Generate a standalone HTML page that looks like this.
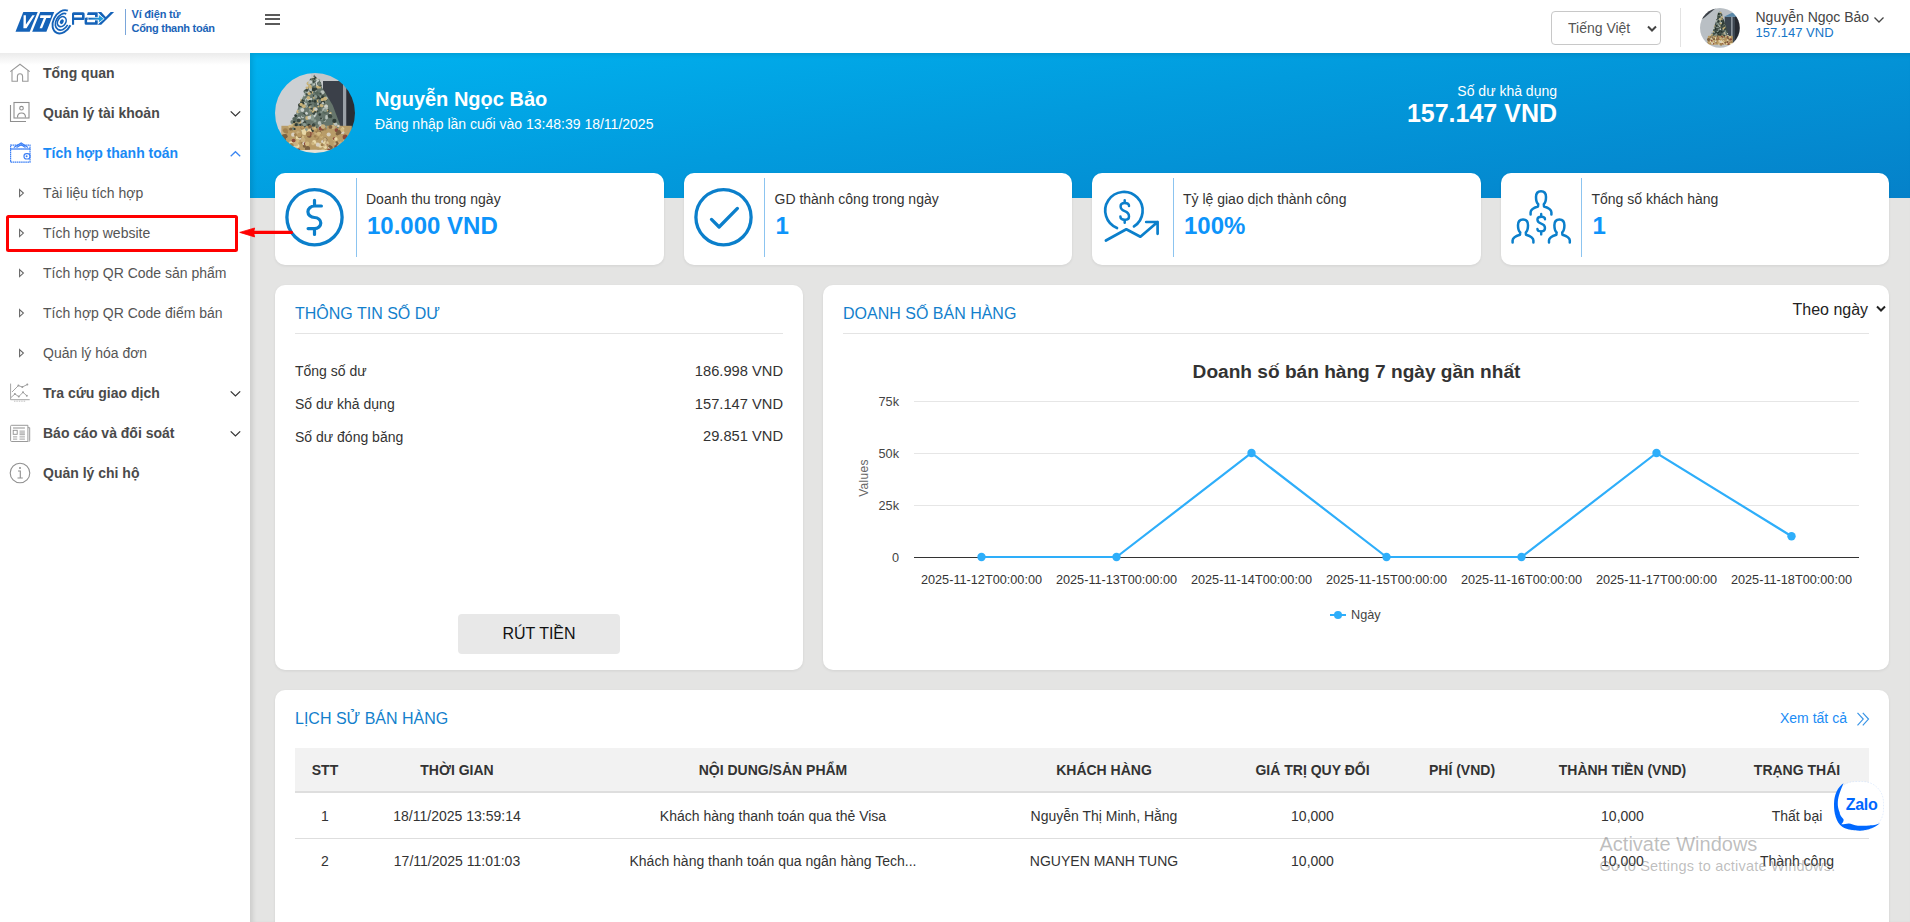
<!DOCTYPE html><html><head><meta charset="utf-8"><style>
*{box-sizing:border-box}
html,body{margin:0;padding:0}
body{width:1910px;height:922px;overflow:hidden;position:relative;font-family:"Liberation Sans",sans-serif;background:#e4e4e3;color:#333}
.t{position:absolute;line-height:1;white-space:nowrap}
.a,.i{position:absolute;display:block;overflow:visible}
.box{position:absolute}
.card{position:absolute;background:#fff;border-radius:10px;box-shadow:0 1px 3px rgba(0,0,0,.08)}
</style></head><body>
<div class="box" style="left:0;top:0;width:1910px;height:53px;background:#fff"></div>
<div class="box" style="left:0;top:53px;width:250px;height:869px;background:#fff"></div>
<div class="box" style="left:0;top:53px;width:250px;height:12px;background:linear-gradient(#ebebeb,rgba(255,255,255,0))"></div>
<div class="box" style="left:250px;top:53px;width:1660px;height:145px;background:linear-gradient(172deg,#00b3f0 0%,#029bdd 45%,#0581c9 100%)"></div>
<div class="box" style="left:250px;top:53px;width:1660px;height:869px;box-shadow:inset 3px 2px 4px rgba(0,0,0,.10)"></div>
<svg class="i" style="left:0;top:0" width="125" height="45" viewBox="0 0 125 45">
<g fill="#1462b8">
<polygon points="23.3,12 37.7,12 29.7,31.8 15.5,31.8"/>
<polygon points="40.2,12 54.2,12 46.4,31.8 32.2,31.8"/>
</g>
<g fill="#fff">
<polygon points="23.6,15.3 25.9,15.3 25.9,24.4 32.4,15.3 34.8,15.3 26.5,28.2 23.4,28.2"/>
<polygon points="40.4,15.3 51.2,15.3 50.4,17.9 46.3,17.9 42.1,28.3 39.6,28.3 43.8,17.9 40,17.9"/>
</g>
<path d="M67.81,10.72 A8.8,12.4 30 1 0 70.43,25.25" fill="none" stroke="#1462b8" stroke-width="1.9"/><path d="M66.27,13.85 A6.2,8.9 30 1 0 67.67,24.90" fill="none" stroke="#1462b8" stroke-width="1.7"/><ellipse cx="61.8" cy="21.7" rx="4.0" ry="5.3" transform="rotate(30 61.8 21.7)" fill="none" stroke="#1462b8" stroke-width="1.6"/><ellipse cx="61.8" cy="21.7" rx="1.8" ry="2.5" transform="rotate(30 61.8 21.7)" fill="#1462b8"/>
<g fill="#1462b8">
<path d="M73.5,12.2 H83 Q84.6,12.2 84.6,13.8 V18.4 Q84.6,20 83,20 H74.1 V24.8 H72 V13.7 Q72,12.2 73.5,12.2 Z M74.1,15.1 V17.4 H82 V15.1 Z" fill-rule="evenodd"/>
<path d="M87.8,12.2 H97.7 V24.8 H86.1 Q84.6,24.8 84.6,23.3 V19 Q84.6,17.4 86.1,17.4 H95 V15.1 H87 Z M87.1,20 V22.2 H95 V20 Z" fill-rule="evenodd"/>
<polygon points="97.7,12 101.2,12 105.8,17 110.7,12 114.1,12 101.2,24.8 97.7,24.8 103.8,18.8"/>
</g>
<defs><linearGradient id="lg1" x1="0" x2="1"><stop offset="0" stop-color="#1462b8"/><stop offset="1" stop-color="#2ab0e6"/></linearGradient></defs>
<polygon points="88,17.4 98.6,17.4 98.6,14.4 104.2,18.7 98.6,23 98.6,20 88,20" fill="url(#lg1)" stroke="#fff" stroke-width="0.7"/>
</svg>
<div class="box" style="left:125px;top:9px;width:1px;height:26px;background:#7aa6da"></div>
<div class="t" style="left:131.5px;top:9.29px;font-size:11px;font-weight:700;color:#1b64b8;letter-spacing:-0.2px">Ví điện tử</div>
<div class="t" style="left:131.5px;top:22.89px;font-size:11px;font-weight:700;color:#1b64b8;letter-spacing:-0.28px">Cổng thanh toán</div>
<div class="box" style="left:265px;top:13.5px;width:15px;height:2px;background:#5a5a5a"></div>
<div class="box" style="left:265px;top:18px;width:15px;height:2px;background:#5a5a5a"></div>
<div class="box" style="left:265px;top:22.5px;width:15px;height:2px;background:#5a5a5a"></div>
<div class="box" style="left:1551px;top:11px;width:110px;height:34px;border:1px solid #c8c8c8;border-radius:4px;background:#fff"></div>
<div class="t" style="left:1568px;top:20.65px;font-size:14px;font-weight:400;color:#555;">Tiếng Việt</div>
<svg class="i" style="left:1646px;top:23.5px" width="12" height="10" viewBox="0 0 12 10"><path d="M2,2.5 L6,6.5 L10,2.5" fill="none" stroke="#444" stroke-width="2"/></svg>
<div class="box" style="left:1680px;top:8px;width:1px;height:39px;background:#e3e3e3"></div>
<svg class="a" style="left:1700.3px;top:8.200000000000003px" width="39.8" height="39.8" viewBox="0 0 100 100">
<defs><clipPath id="ch"><circle cx="50" cy="50" r="50"/></clipPath>
<filter id="fh" x="-20%" y="-20%" width="140%" height="140%"><feGaussianBlur stdDeviation="1.3"/></filter></defs>
<g clip-path="url(#ch)"><g filter="url(#fh)">
<rect x="-5" y="-5" width="110" height="110" fill="#b9bfc4"/><polygon points="0,0 40,0 10,25 0,30" fill="#3a4046"/><rect x="62" y="22" width="28" height="70" fill="#3b4450"/><rect x="78" y="22" width="4" height="70" fill="#8e979f"/><rect x="88" y="0" width="16" height="100" fill="#252a30"/><polygon points="60,22 95,5 95,22" fill="#5a88a8"/><polygon points="50,8 36,45 30,78 74,78 66,45" fill="#3e4a44"/><rect x="20" y="70" width="62" height="22" fill="#b39258"/>
<circle cx="43.2" cy="33.4" r="1.3" fill="#c8b27a"/><circle cx="33.3" cy="66.2" r="1.3" fill="#5f6f64"/><circle cx="37.3" cy="45.5" r="1.8" fill="#b9c2bc"/><circle cx="50.8" cy="27.9" r="2.4" fill="#2f3b35"/><circle cx="47.0" cy="20.2" r="2.0" fill="#c8b27a"/><circle cx="50.7" cy="16.1" r="2.6" fill="#2f3b35"/><circle cx="52.6" cy="15.1" r="1.8" fill="#8a9a90"/><circle cx="52.0" cy="47.7" r="2.3" fill="#5f6f64"/><circle cx="51.1" cy="23.9" r="1.5" fill="#c8b27a"/><circle cx="52.0" cy="18.4" r="1.3" fill="#5f6f64"/><circle cx="52.6" cy="25.6" r="2.3" fill="#b9c2bc"/><circle cx="60.8" cy="42.7" r="1.6" fill="#8a9a90"/><circle cx="57.9" cy="64.4" r="1.3" fill="#46564d"/><circle cx="49.9" cy="31.8" r="2.2" fill="#8a9a90"/><circle cx="58.6" cy="31.0" r="1.9" fill="#2f3b35"/><circle cx="48.0" cy="22.9" r="1.8" fill="#b9c2bc"/><circle cx="30.1" cy="75.5" r="2.0" fill="#5f6f64"/><circle cx="41.9" cy="69.8" r="1.7" fill="#c8b27a"/><circle cx="58.0" cy="44.8" r="2.4" fill="#2f3b35"/><circle cx="48.8" cy="74.3" r="1.3" fill="#c8b27a"/><circle cx="42.9" cy="60.3" r="2.6" fill="#5f6f64"/><circle cx="41.1" cy="66.2" r="2.4" fill="#b9c2bc"/><circle cx="59.0" cy="34.9" r="1.4" fill="#8a9a90"/><circle cx="45.4" cy="19.7" r="1.6" fill="#26312c"/><circle cx="46.2" cy="60.7" r="1.9" fill="#26312c"/><circle cx="48.8" cy="23.0" r="2.4" fill="#8a9a90"/><circle cx="64.9" cy="66.1" r="2.2" fill="#8a9a90"/><circle cx="58.8" cy="77.1" r="2.5" fill="#b9c2bc"/><circle cx="46.1" cy="22.0" r="2.1" fill="#46564d"/><circle cx="51.9" cy="12.8" r="1.6" fill="#46564d"/><circle cx="49.6" cy="12.3" r="2.1" fill="#8a9a90"/><circle cx="42.8" cy="33.0" r="1.9" fill="#26312c"/><circle cx="55.7" cy="52.8" r="1.8" fill="#2f3b35"/><circle cx="69.5" cy="69.5" r="2.3" fill="#c8b27a"/><circle cx="47.7" cy="37.9" r="1.9" fill="#2f3b35"/><circle cx="43.0" cy="38.4" r="1.8" fill="#46564d"/><circle cx="51.0" cy="19.3" r="1.2" fill="#2f3b35"/><circle cx="45.3" cy="22.0" r="2.1" fill="#8a9a90"/><circle cx="47.6" cy="16.6" r="1.4" fill="#b9c2bc"/><circle cx="47.5" cy="28.6" r="1.9" fill="#8a9a90"/><circle cx="49.9" cy="19.6" r="1.9" fill="#b9c2bc"/><circle cx="43.3" cy="32.6" r="1.7" fill="#c8b27a"/><circle cx="55.5" cy="29.5" r="1.9" fill="#46564d"/><circle cx="56.4" cy="25.5" r="1.4" fill="#8a9a90"/><circle cx="36.3" cy="47.8" r="1.6" fill="#5f6f64"/><circle cx="36.4" cy="54.4" r="1.6" fill="#26312c"/><circle cx="42.9" cy="36.2" r="1.5" fill="#26312c"/><circle cx="50.1" cy="47.7" r="1.5" fill="#c8b27a"/><circle cx="69.7" cy="65.6" r="1.5" fill="#26312c"/><circle cx="48.4" cy="27.8" r="1.5" fill="#26312c"/><circle cx="46.0" cy="46.2" r="2.6" fill="#2f3b35"/><circle cx="48.9" cy="64.1" r="2.2" fill="#46564d"/><circle cx="47.5" cy="75.1" r="2.6" fill="#c8b27a"/><circle cx="43.6" cy="75.0" r="1.3" fill="#46564d"/><circle cx="45.8" cy="43.0" r="2.1" fill="#b9c2bc"/><circle cx="65.2" cy="71.4" r="2.5" fill="#b9c2bc"/><circle cx="52.9" cy="34.7" r="2.1" fill="#26312c"/><circle cx="62.7" cy="72.0" r="1.5" fill="#26312c"/><circle cx="47.1" cy="70.7" r="1.7" fill="#c8b27a"/><circle cx="69.0" cy="64.9" r="1.8" fill="#b9c2bc"/><circle cx="34.4" cy="61.1" r="1.4" fill="#46564d"/><circle cx="46.2" cy="20.4" r="2.3" fill="#b9c2bc"/><circle cx="53.8" cy="21.6" r="2.1" fill="#b9c2bc"/><circle cx="51.0" cy="35.1" r="1.2" fill="#46564d"/><circle cx="59.1" cy="64.8" r="1.9" fill="#2f3b35"/><circle cx="47.0" cy="73.6" r="1.5" fill="#26312c"/><circle cx="29.5" cy="69.7" r="1.6" fill="#46564d"/><circle cx="51.4" cy="27.9" r="2.0" fill="#8a9a90"/><circle cx="31.7" cy="67.1" r="1.7" fill="#c8b27a"/><circle cx="52.1" cy="42.2" r="1.8" fill="#5f6f64"/><circle cx="50.1" cy="72.6" r="1.4" fill="#5f6f64"/><circle cx="60.3" cy="45.7" r="1.5" fill="#26312c"/><circle cx="51.6" cy="12.3" r="1.4" fill="#46564d"/><circle cx="37.7" cy="52.9" r="1.7" fill="#2f3b35"/><circle cx="51.5" cy="46.2" r="2.3" fill="#26312c"/><circle cx="30.6" cy="70.3" r="1.6" fill="#46564d"/><circle cx="50.3" cy="63.0" r="1.2" fill="#5f6f64"/><circle cx="30.7" cy="71.0" r="2.1" fill="#8a9a90"/><circle cx="50.3" cy="45.4" r="1.6" fill="#c8b27a"/><circle cx="58.4" cy="45.5" r="2.5" fill="#5f6f64"/><circle cx="63.5" cy="58.1" r="2.5" fill="#8a9a90"/><circle cx="36.9" cy="70.9" r="1.4" fill="#b9c2bc"/><circle cx="49.4" cy="20.0" r="2.1" fill="#2f3b35"/><circle cx="43.1" cy="40.3" r="2.3" fill="#8a9a90"/><circle cx="34.7" cy="71.2" r="2.1" fill="#c8b27a"/><circle cx="44.7" cy="36.2" r="2.6" fill="#46564d"/><circle cx="56.7" cy="26.5" r="2.4" fill="#b9c2bc"/><circle cx="52.1" cy="22.7" r="1.4" fill="#46564d"/><circle cx="50.4" cy="40.5" r="1.8" fill="#8a9a90"/><circle cx="41.5" cy="35.5" r="1.2" fill="#8a9a90"/><circle cx="48.2" cy="48.6" r="1.7" fill="#2f3b35"/><circle cx="44.3" cy="46.2" r="1.4" fill="#2f3b35"/><circle cx="37.7" cy="72.6" r="1.3" fill="#2f3b35"/><circle cx="57.0" cy="29.9" r="1.6" fill="#46564d"/><circle cx="49.1" cy="20.6" r="2.3" fill="#c8b27a"/><circle cx="44.2" cy="29.1" r="2.0" fill="#5f6f64"/><circle cx="35.3" cy="58.2" r="2.3" fill="#2f3b35"/><circle cx="55.3" cy="24.1" r="2.5" fill="#8a9a90"/><circle cx="59.9" cy="53.9" r="2.1" fill="#2f3b35"/><circle cx="46.5" cy="26.7" r="1.8" fill="#2f3b35"/><circle cx="51.1" cy="34.4" r="2.1" fill="#8a9a90"/><circle cx="51.5" cy="14.9" r="2.6" fill="#2f3b35"/><circle cx="44.7" cy="29.3" r="2.1" fill="#8a9a90"/><circle cx="41.6" cy="47.1" r="1.9" fill="#b9c2bc"/><circle cx="48.0" cy="23.7" r="2.6" fill="#2f3b35"/><circle cx="46.7" cy="14.4" r="2.0" fill="#5f6f64"/><circle cx="49.7" cy="24.5" r="1.3" fill="#b9c2bc"/><circle cx="47.2" cy="66.0" r="2.0" fill="#b9c2bc"/><circle cx="70.7" cy="70.7" r="2.2" fill="#8a9a90"/><circle cx="42.4" cy="76.8" r="2.4" fill="#26312c"/><circle cx="36.6" cy="60.1" r="2.6" fill="#8a9a90"/><circle cx="29.7" cy="67.2" r="2.2" fill="#c8b27a"/><circle cx="44.5" cy="28.9" r="2.1" fill="#2f3b35"/><circle cx="50.1" cy="37.1" r="2.0" fill="#8a9a90"/><circle cx="33.9" cy="57.7" r="1.4" fill="#46564d"/><circle cx="44.1" cy="41.4" r="2.6" fill="#8a9a90"/><circle cx="42.6" cy="48.1" r="1.5" fill="#8a9a90"/><circle cx="47.8" cy="24.1" r="1.9" fill="#2f3b35"/><circle cx="41.9" cy="45.2" r="2.3" fill="#5f6f64"/><circle cx="52.9" cy="18.0" r="1.8" fill="#46564d"/><circle cx="46.6" cy="14.8" r="2.1" fill="#8a9a90"/><circle cx="54.1" cy="17.6" r="2.3" fill="#26312c"/><circle cx="57.3" cy="55.4" r="1.7" fill="#5f6f64"/><circle cx="59.5" cy="33.5" r="1.6" fill="#46564d"/><circle cx="38.5" cy="52.8" r="2.4" fill="#26312c"/><circle cx="55.6" cy="70.9" r="2.2" fill="#c8b27a"/><circle cx="61.2" cy="45.4" r="1.9" fill="#26312c"/><circle cx="62.7" cy="67.1" r="2.2" fill="#26312c"/><circle cx="58.5" cy="64.7" r="2.1" fill="#c8b27a"/><circle cx="45.9" cy="17.6" r="1.7" fill="#c8b27a"/><circle cx="53.3" cy="18.9" r="1.3" fill="#5f6f64"/><circle cx="50.2" cy="13.2" r="1.9" fill="#46564d"/><circle cx="51.6" cy="12.2" r="2.5" fill="#c8b27a"/><circle cx="31.9" cy="71.3" r="1.3" fill="#5f6f64"/><circle cx="40.7" cy="60.6" r="2.4" fill="#2f3b35"/><circle cx="54.0" cy="27.5" r="2.2" fill="#46564d"/><circle cx="49.7" cy="76.4" r="1.3" fill="#b9c2bc"/><circle cx="40.4" cy="72.1" r="2.1" fill="#2f3b35"/><circle cx="35.9" cy="54.4" r="1.7" fill="#46564d"/><circle cx="56.5" cy="55.0" r="2.0" fill="#5f6f64"/><circle cx="47.4" cy="12.8" r="2.6" fill="#8a9a90"/><circle cx="47.3" cy="18.6" r="1.6" fill="#b9c2bc"/><circle cx="49.0" cy="46.1" r="2.3" fill="#b9c2bc"/><circle cx="52.4" cy="77.6" r="2.6" fill="#8a9a90"/><circle cx="27.8" cy="73.8" r="1.3" fill="#b9c2bc"/><circle cx="63.5" cy="45.4" r="1.7" fill="#8a9a90"/><circle cx="69.5" cy="72.5" r="2.0" fill="#2f3b35"/><circle cx="50.3" cy="21.4" r="1.4" fill="#8a9a90"/><circle cx="50.4" cy="66.1" r="2.2" fill="#2f3b35"/><circle cx="56.1" cy="27.3" r="1.8" fill="#b9c2bc"/><circle cx="55.5" cy="22.5" r="1.8" fill="#c8b27a"/><circle cx="43.4" cy="31.9" r="1.7" fill="#8a9a90"/><circle cx="48.2" cy="20.0" r="2.3" fill="#8a9a90"/><circle cx="34.1" cy="67.4" r="2.2" fill="#46564d"/><circle cx="40.6" cy="71.5" r="1.3" fill="#8a9a90"/><circle cx="58.3" cy="37.8" r="1.7" fill="#2f3b35"/><circle cx="44.6" cy="40.3" r="1.6" fill="#2f3b35"/><circle cx="51.2" cy="15.4" r="2.5" fill="#c8b27a"/><circle cx="46.2" cy="28.5" r="1.6" fill="#5f6f64"/><circle cx="61.1" cy="63.0" r="2.4" fill="#b9c2bc"/><circle cx="55.3" cy="65.6" r="2.0" fill="#5f6f64"/><circle cx="33.5" cy="59.5" r="1.8" fill="#c8b27a"/><circle cx="38.4" cy="52.6" r="1.6" fill="#26312c"/><circle cx="53.2" cy="15.2" r="1.4" fill="#46564d"/><circle cx="44.9" cy="39.4" r="2.2" fill="#8a9a90"/><circle cx="38.5" cy="76.4" r="1.5" fill="#c8b27a"/><circle cx="54.5" cy="43.9" r="1.4" fill="#2f3b35"/><circle cx="46.4" cy="22.7" r="1.9" fill="#26312c"/><circle cx="56.1" cy="26.5" r="1.8" fill="#26312c"/><circle cx="46.5" cy="21.2" r="1.4" fill="#2f3b35"/><circle cx="44.7" cy="48.7" r="1.6" fill="#8a9a90"/><circle cx="61.7" cy="49.6" r="2.4" fill="#c8b27a"/><circle cx="55.4" cy="37.3" r="1.7" fill="#46564d"/><circle cx="41.2" cy="34.3" r="2.0" fill="#8a9a90"/><circle cx="53.9" cy="35.8" r="2.1" fill="#5f6f64"/><circle cx="37.8" cy="68.9" r="2.5" fill="#8a9a90"/><circle cx="53.2" cy="37.4" r="2.5" fill="#b9c2bc"/><circle cx="65.8" cy="68.0" r="1.4" fill="#2f3b35"/><circle cx="56.3" cy="40.1" r="1.9" fill="#26312c"/><circle cx="34.6" cy="50.8" r="2.5" fill="#b9c2bc"/><circle cx="51.3" cy="73.3" r="2.6" fill="#b9c2bc"/><circle cx="43.7" cy="28.4" r="1.4" fill="#46564d"/><circle cx="31.4" cy="76.1" r="2.2" fill="#26312c"/><circle cx="58.9" cy="54.7" r="1.3" fill="#b9c2bc"/><circle cx="30.5" cy="63.3" r="1.5" fill="#46564d"/><circle cx="56.6" cy="72.7" r="2.5" fill="#8a9a90"/><circle cx="50.9" cy="53.3" r="2.2" fill="#b9c2bc"/><circle cx="45.6" cy="19.4" r="2.5" fill="#5f6f64"/><circle cx="46.7" cy="24.7" r="2.0" fill="#26312c"/><circle cx="48.9" cy="12.7" r="1.6" fill="#b9c2bc"/><circle cx="56.5" cy="32.9" r="1.9" fill="#46564d"/><circle cx="46.1" cy="27.5" r="2.2" fill="#b9c2bc"/><circle cx="41.1" cy="32.3" r="2.4" fill="#b9c2bc"/><circle cx="36.0" cy="54.7" r="2.1" fill="#46564d"/><circle cx="37.5" cy="73.1" r="2.2" fill="#2f3b35"/><circle cx="45.0" cy="59.4" r="1.5" fill="#b9c2bc"/><circle cx="59.6" cy="64.6" r="1.3" fill="#5f6f64"/><circle cx="41.9" cy="44.7" r="2.3" fill="#26312c"/><circle cx="45.7" cy="27.2" r="2.4" fill="#26312c"/><circle cx="51.2" cy="19.2" r="1.5" fill="#5f6f64"/><circle cx="48.8" cy="26.7" r="1.3" fill="#c8b27a"/><circle cx="63.2" cy="51.3" r="1.5" fill="#2f3b35"/><circle cx="32.9" cy="76.3" r="2.2" fill="#2f3b35"/><circle cx="49.3" cy="24.2" r="2.4" fill="#c8b27a"/><circle cx="68.5" cy="60.4" r="1.7" fill="#46564d"/><circle cx="55.8" cy="24.2" r="1.9" fill="#c8b27a"/><circle cx="54.3" cy="32.6" r="1.7" fill="#26312c"/><circle cx="43.5" cy="33.9" r="1.3" fill="#2f3b35"/><circle cx="49.3" cy="17.3" r="2.0" fill="#2f3b35"/><circle cx="45.4" cy="62.1" r="2.4" fill="#26312c"/><circle cx="47.2" cy="66.3" r="2.2" fill="#2f3b35"/><circle cx="50.6" cy="24.9" r="1.5" fill="#b9c2bc"/><circle cx="58.4" cy="36.0" r="2.1" fill="#2f3b35"/><circle cx="52.0" cy="28.4" r="1.3" fill="#b9c2bc"/><circle cx="47.0" cy="14.3" r="1.6" fill="#2f3b35"/><circle cx="65.1" cy="61.3" r="1.7" fill="#8a9a90"/><circle cx="59.0" cy="34.1" r="1.6" fill="#2f3b35"/><circle cx="43.3" cy="59.3" r="1.6" fill="#8a9a90"/><circle cx="53.5" cy="59.6" r="2.1" fill="#26312c"/><circle cx="27.9" cy="74.3" r="1.4" fill="#46564d"/><circle cx="48.7" cy="59.2" r="1.7" fill="#26312c"/><circle cx="48.9" cy="28.6" r="1.4" fill="#b9c2bc"/><circle cx="36.8" cy="44.8" r="1.6" fill="#c8b27a"/><circle cx="37.6" cy="57.7" r="1.7" fill="#46564d"/><circle cx="47.3" cy="33.1" r="2.0" fill="#26312c"/><circle cx="47.0" cy="45.8" r="1.5" fill="#46564d"/><circle cx="46.2" cy="16.3" r="2.0" fill="#5f6f64"/><circle cx="49.1" cy="22.6" r="2.6" fill="#2f3b35"/><circle cx="43.0" cy="29.5" r="1.8" fill="#2f3b35"/><circle cx="72.8" cy="77.2" r="1.5" fill="#46564d"/><circle cx="52.8" cy="39.5" r="1.5" fill="#c8b27a"/><circle cx="57.9" cy="47.5" r="1.4" fill="#26312c"/><circle cx="41.3" cy="67.5" r="1.6" fill="#5f6f64"/><circle cx="46.1" cy="28.8" r="1.5" fill="#b9c2bc"/><circle cx="44.5" cy="28.2" r="1.5" fill="#5f6f64"/><circle cx="48.0" cy="16.3" r="1.9" fill="#46564d"/><circle cx="54.7" cy="27.3" r="1.8" fill="#c8b27a"/><circle cx="46.6" cy="14.4" r="1.5" fill="#26312c"/><circle cx="46.9" cy="41.6" r="1.5" fill="#8a9a90"/><circle cx="50.8" cy="15.3" r="2.0" fill="#26312c"/><circle cx="44.1" cy="73.4" r="1.4" fill="#26312c"/><circle cx="58.7" cy="51.8" r="2.5" fill="#c8b27a"/><circle cx="51.0" cy="19.0" r="1.7" fill="#5f6f64"/><circle cx="48.9" cy="14.5" r="1.5" fill="#2f3b35"/><circle cx="51.6" cy="28.8" r="2.5" fill="#c8b27a"/><circle cx="63.0" cy="65.8" r="2.1" fill="#b9c2bc"/><circle cx="47.5" cy="24.2" r="1.2" fill="#46564d"/><circle cx="49.6" cy="44.7" r="1.3" fill="#b9c2bc"/><circle cx="51.1" cy="38.1" r="1.9" fill="#c8b27a"/><circle cx="46.5" cy="55.1" r="1.8" fill="#8a9a90"/><circle cx="46.6" cy="30.7" r="1.6" fill="#2f3b35"/><circle cx="45.7" cy="49.4" r="1.2" fill="#b9c2bc"/><circle cx="61.7" cy="62.6" r="1.5" fill="#c8b27a"/><circle cx="39.0" cy="60.1" r="1.8" fill="#2f3b35"/><circle cx="45.3" cy="22.3" r="1.8" fill="#2f3b35"/><circle cx="48.3" cy="70.3" r="1.4" fill="#46564d"/><circle cx="47.3" cy="15.4" r="2.5" fill="#26312c"/><circle cx="51.1" cy="17.9" r="2.2" fill="#8a9a90"/><circle cx="48.1" cy="23.3" r="1.9" fill="#46564d"/><circle cx="32.1" cy="73.1" r="2.3" fill="#b9c2bc"/><circle cx="68.3" cy="87.4" r="1.7" fill="#e8d8a8"/><circle cx="78.5" cy="90.7" r="2.0" fill="#d8d0c0"/><circle cx="58.2" cy="83.4" r="3.0" fill="#a08050"/><circle cx="69.5" cy="83.6" r="2.6" fill="#d0b880"/><circle cx="57.3" cy="88.8" r="2.9" fill="#8a4a3a"/><circle cx="33.1" cy="74.0" r="3.1" fill="#7a6040"/><circle cx="41.6" cy="73.4" r="1.9" fill="#d0b880"/><circle cx="73.8" cy="85.9" r="3.0" fill="#b89a64"/><circle cx="60.3" cy="88.5" r="1.7" fill="#c8b080"/><circle cx="53.0" cy="83.2" r="2.6" fill="#e8d8a8"/><circle cx="35.0" cy="76.8" r="2.6" fill="#7a6040"/><circle cx="46.3" cy="79.8" r="1.5" fill="#b89a64"/><circle cx="47.9" cy="91.7" r="2.8" fill="#d8d0c0"/><circle cx="47.5" cy="87.2" r="2.9" fill="#d0b880"/><circle cx="24.0" cy="78.8" r="2.2" fill="#c8b080"/><circle cx="46.5" cy="72.0" r="1.6" fill="#b89a64"/><circle cx="75.3" cy="72.9" r="2.8" fill="#c8b080"/><circle cx="23.3" cy="81.3" r="2.6" fill="#7a6040"/><circle cx="21.6" cy="87.3" r="3.2" fill="#a08050"/><circle cx="68.9" cy="86.1" r="1.7" fill="#8a4a3a"/><circle cx="37.3" cy="89.5" r="2.7" fill="#d0b880"/><circle cx="33.3" cy="85.9" r="2.5" fill="#c8b080"/><circle cx="39.4" cy="75.5" r="3.0" fill="#e8d8a8"/><circle cx="35.2" cy="80.0" r="1.9" fill="#d8d0c0"/><circle cx="50.4" cy="75.8" r="2.1" fill="#c8b080"/><circle cx="44.2" cy="74.4" r="2.7" fill="#e8d8a8"/><circle cx="30.1" cy="89.7" r="1.7" fill="#e8d8a8"/><circle cx="58.2" cy="81.7" r="3.1" fill="#c8b080"/><circle cx="51.3" cy="80.0" r="1.9" fill="#a08050"/><circle cx="71.4" cy="81.8" r="2.0" fill="#c8b080"/><circle cx="54.6" cy="91.8" r="2.1" fill="#c8b080"/><circle cx="33.8" cy="71.8" r="2.0" fill="#b89a64"/><circle cx="38.6" cy="81.4" r="2.7" fill="#c8b080"/><circle cx="33.3" cy="86.4" r="2.5" fill="#e8d8a8"/><circle cx="50.8" cy="79.5" r="1.7" fill="#b89a64"/><circle cx="59.2" cy="75.0" r="1.6" fill="#b89a64"/><circle cx="38.2" cy="82.5" r="2.4" fill="#c8b080"/><circle cx="38.1" cy="79.1" r="1.8" fill="#d0b880"/><circle cx="48.5" cy="83.7" r="1.5" fill="#d0b880"/><circle cx="62.4" cy="87.6" r="1.7" fill="#d8d0c0"/><circle cx="72.3" cy="84.0" r="2.2" fill="#e8d8a8"/><circle cx="20.7" cy="75.8" r="2.5" fill="#c8b080"/><circle cx="56.1" cy="82.7" r="1.9" fill="#d8d0c0"/><circle cx="22.6" cy="89.9" r="2.2" fill="#b89a64"/><circle cx="23.5" cy="75.2" r="1.5" fill="#a08050"/><circle cx="76.5" cy="82.1" r="2.2" fill="#d0b880"/><circle cx="58.6" cy="81.4" r="2.9" fill="#7a6040"/><circle cx="38.6" cy="73.8" r="2.6" fill="#e8d8a8"/><circle cx="63.5" cy="91.9" r="2.7" fill="#d8d0c0"/><circle cx="70.7" cy="70.1" r="1.6" fill="#d8d0c0"/><circle cx="30.5" cy="84.4" r="1.9" fill="#a08050"/><circle cx="27.4" cy="84.2" r="2.7" fill="#e8d8a8"/><circle cx="53.2" cy="75.9" r="2.7" fill="#7a6040"/><circle cx="78.3" cy="90.2" r="2.6" fill="#e8d8a8"/><circle cx="33.0" cy="91.2" r="1.8" fill="#b89a64"/><circle cx="70.5" cy="89.9" r="3.1" fill="#8a4a3a"/><circle cx="39.6" cy="86.4" r="2.1" fill="#7a6040"/><circle cx="74.5" cy="75.3" r="2.3" fill="#d8d0c0"/><circle cx="20.4" cy="81.7" r="2.2" fill="#b89a64"/><circle cx="54.2" cy="85.9" r="2.8" fill="#e8d8a8"/><circle cx="55.1" cy="78.6" r="1.7" fill="#d0b880"/><circle cx="26.4" cy="70.6" r="2.1" fill="#d0b880"/><circle cx="21.7" cy="73.1" r="1.7" fill="#b89a64"/><circle cx="22.6" cy="84.2" r="2.8" fill="#a08050"/><circle cx="55.4" cy="71.4" r="1.8" fill="#c8b080"/><circle cx="52.0" cy="91.0" r="3.0" fill="#a08050"/><circle cx="62.7" cy="86.6" r="1.7" fill="#7a6040"/><circle cx="26.7" cy="74.5" r="3.1" fill="#b89a64"/><circle cx="65.2" cy="90.0" r="2.9" fill="#a08050"/><circle cx="37.2" cy="83.9" r="1.7" fill="#a08050"/><circle cx="58.8" cy="87.4" r="2.0" fill="#e8d8a8"/><circle cx="21.3" cy="79.3" r="3.1" fill="#e8d8a8"/><circle cx="65.6" cy="71.1" r="2.8" fill="#c8b080"/><circle cx="48.6" cy="83.2" r="2.6" fill="#e8d8a8"/><circle cx="44.8" cy="70.7" r="2.4" fill="#7a6040"/><circle cx="48.1" cy="72.2" r="2.4" fill="#b89a64"/><circle cx="71.7" cy="74.8" r="2.5" fill="#a08050"/><circle cx="46.2" cy="76.3" r="2.0" fill="#8a4a3a"/><circle cx="23.2" cy="86.5" r="2.3" fill="#c8b080"/><circle cx="67.8" cy="80.8" r="3.1" fill="#d0b880"/><circle cx="77.4" cy="83.0" r="2.5" fill="#e8d8a8"/><circle cx="68.9" cy="73.5" r="2.3" fill="#8a4a3a"/><circle cx="58.2" cy="72.4" r="2.3" fill="#a08050"/><circle cx="53.7" cy="91.8" r="2.6" fill="#a08050"/><circle cx="44.1" cy="77.8" r="3.0" fill="#7a6040"/><circle cx="45.3" cy="86.4" r="2.1" fill="#b89a64"/><circle cx="45.7" cy="76.7" r="2.1" fill="#d0b880"/><circle cx="34.0" cy="89.4" r="1.7" fill="#d8d0c0"/><circle cx="61.4" cy="83.1" r="2.1" fill="#b89a64"/><circle cx="29.3" cy="77.2" r="2.6" fill="#d8d0c0"/><circle cx="30.2" cy="86.3" r="2.7" fill="#d8d0c0"/><circle cx="33.9" cy="75.7" r="2.3" fill="#c8b080"/><circle cx="34.3" cy="89.5" r="2.0" fill="#8a4a3a"/><circle cx="69.6" cy="86.6" r="2.7" fill="#d0b880"/><circle cx="63.4" cy="91.4" r="1.8" fill="#c8b080"/><circle cx="31.4" cy="77.2" r="1.8" fill="#a08050"/><circle cx="31.7" cy="84.5" r="3.2" fill="#d0b880"/><circle cx="64.0" cy="87.5" r="2.0" fill="#7a6040"/><circle cx="74.7" cy="72.4" r="1.9" fill="#e8d8a8"/><circle cx="22.0" cy="78.5" r="3.0" fill="#7a6040"/><circle cx="33.3" cy="79.6" r="2.3" fill="#e8d8a8"/><circle cx="56.2" cy="73.1" r="1.5" fill="#7a6040"/><circle cx="71.2" cy="75.3" r="2.9" fill="#7a6040"/><circle cx="59.1" cy="84.7" r="2.7" fill="#8a4a3a"/><circle cx="47.2" cy="84.1" r="1.9" fill="#c8b080"/><circle cx="73.7" cy="85.4" r="2.8" fill="#8a4a3a"/><circle cx="57.8" cy="85.7" r="2.9" fill="#e8d8a8"/><circle cx="21.2" cy="80.6" r="2.4" fill="#7a6040"/><circle cx="72.4" cy="84.5" r="2.8" fill="#c8b080"/><circle cx="49.4" cy="78.6" r="1.6" fill="#a08050"/><circle cx="29.7" cy="82.0" r="2.4" fill="#8a4a3a"/><circle cx="54.5" cy="72.2" r="2.7" fill="#8a4a3a"/><circle cx="58.4" cy="81.3" r="2.4" fill="#c8b080"/><circle cx="76.9" cy="79.0" r="3.2" fill="#8a4a3a"/><circle cx="50.8" cy="74.0" r="2.7" fill="#a08050"/><circle cx="58.3" cy="83.5" r="2.0" fill="#e8d8a8"/><circle cx="20.8" cy="78.8" r="3.1" fill="#7a6040"/><circle cx="60.5" cy="83.8" r="1.7" fill="#e8d8a8"/><circle cx="44.0" cy="76.7" r="3.2" fill="#8a4a3a"/><circle cx="47.7" cy="91.1" r="1.7" fill="#d0b880"/><circle cx="68.6" cy="87.1" r="2.3" fill="#8a4a3a"/><circle cx="33.6" cy="82.4" r="2.1" fill="#d0b880"/><circle cx="69.1" cy="84.1" r="2.3" fill="#7a6040"/><circle cx="52.9" cy="76.5" r="2.8" fill="#d0b880"/><circle cx="67.0" cy="80.3" r="2.0" fill="#8a4a3a"/><circle cx="35.2" cy="78.3" r="2.7" fill="#7a6040"/><circle cx="68.3" cy="80.6" r="2.1" fill="#e8d8a8"/><circle cx="39.2" cy="84.4" r="2.2" fill="#d8d0c0"/><circle cx="59.6" cy="84.0" r="1.8" fill="#c8b080"/><circle cx="43.1" cy="76.7" r="2.9" fill="#a08050"/><circle cx="67.0" cy="89.9" r="2.4" fill="#d0b880"/><circle cx="54.9" cy="77.6" r="1.9" fill="#b89a64"/><circle cx="37.6" cy="71.6" r="2.5" fill="#a08050"/><circle cx="31.1" cy="88.8" r="2.1" fill="#d8d0c0"/><circle cx="74.2" cy="73.4" r="2.5" fill="#d0b880"/><circle cx="78.6" cy="85.1" r="2.6" fill="#a08050"/><circle cx="67.3" cy="89.7" r="1.8" fill="#e8d8a8"/><circle cx="51.8" cy="85.2" r="2.6" fill="#d8d0c0"/><circle cx="27.1" cy="72.6" r="1.9" fill="#7a6040"/><circle cx="49.6" cy="73.1" r="2.3" fill="#b89a64"/>

</g></g></svg>
<div class="t" style="left:1755.5px;top:9.55px;font-size:14px;font-weight:400;color:#444;">Nguyễn Ngọc Bảo</div>
<svg class="i" style="left:1873px;top:15px" width="12" height="9" viewBox="0 0 12 9"><path d="M1.5,2.5 L6,7 L10.5,2.5" fill="none" stroke="#444" stroke-width="1.3"/></svg>
<div class="t" style="left:1755.5px;top:25.59px;font-size:13px;font-weight:400;color:#1676c8;">157.147 VND</div>
<svg class="i" style="left:0;top:55px" width="40" height="35" viewBox="0 55 40 35"><g fill="none" stroke="#999" stroke-width="1.1">
<path d="M10.3,71.6 L20,64.2 L29.7,71.6"/><path d="M12,70.2 V81.2 H17.4 V76.6 Q17.4,73.8 20,73.8 Q22.6,73.8 22.6,76.6 V81.2 H28 V70.2"/></g></svg>
<div class="t" style="left:43px;top:65.85px;font-size:14px;font-weight:700;color:#4a4a4a;">Tổng quan</div>
<svg class="i" style="left:9px;top:101px" width="22" height="22" viewBox="0 0 22 22"><g fill="none" stroke="#8f8f8f" stroke-width="1.1">
<rect x="5" y="1.5" width="15" height="15.5"/><path d="M1.5,4 V20.5 H17"/><circle cx="12.5" cy="7.2" r="1.8"/><path d="M8.5,16.5 Q8.5,12 12.5,12 Q16.5,12 16.5,16.5"/></g></svg>
<div class="t" style="left:43px;top:105.85px;font-size:14px;font-weight:700;color:#4a4a4a;">Quản lý tài khoản</div>
<svg class="i" style="left:228.5px;top:108.5px" width="13" height="9" viewBox="0 0 13 9"><path d="M1.7,2.4 L6.45,7 L11.2,2.4" fill="none" stroke="#333" stroke-width="1.25"/></svg>
<svg class="i" style="left:0;top:135px" width="40" height="35" viewBox="0 135 40 35"><g fill="none" stroke="#3b7ff5" stroke-width="1.2">
<rect x="10.6" y="149" width="19.4" height="13.2" stroke-dasharray="1.6 0.5"/><rect x="10.6" y="145.2" width="19.4" height="3.8" stroke-dasharray="1.6 0.5"/>
<path d="M13.8,147.5 L21.2,143 L28,147.5"/><path d="M16.5,147.5 L21.2,144.8 L25.5,147.5"/>
<rect x="24" y="153.6" width="6" height="5.4" rx="2.5"/></g><circle cx="26.6" cy="156.3" r="1" fill="#3b7ff5"/></svg>
<div class="t" style="left:43px;top:145.85px;font-size:14px;font-weight:700;color:#1a8af5;">Tích hợp thanh toán</div>
<svg class="i" style="left:228.5px;top:148.5px" width="13" height="9" viewBox="0 0 13 9"><path d="M1.7,7.3 L6.45,2.7 L11.2,7.3" fill="none" stroke="#3b86f2" stroke-width="1.25"/></svg>
<svg class="i" style="left:17px;top:187.4px" width="8" height="12" viewBox="0 0 8 12"><path d="M2.6,2.6 L6.4,6.1 L2.6,9.6 Z" fill="none" stroke="#666" stroke-width="1.1" stroke-linejoin="miter"/></svg>
<div class="t" style="left:43px;top:185.55px;font-size:14px;font-weight:400;color:#555;">Tài liệu tích hợp</div>
<svg class="i" style="left:17px;top:227.4px" width="8" height="12" viewBox="0 0 8 12"><path d="M2.6,2.6 L6.4,6.1 L2.6,9.6 Z" fill="none" stroke="#666" stroke-width="1.1" stroke-linejoin="miter"/></svg>
<div class="t" style="left:43px;top:225.55px;font-size:14px;font-weight:400;color:#555;">Tích hợp website</div>
<svg class="i" style="left:17px;top:267.4px" width="8" height="12" viewBox="0 0 8 12"><path d="M2.6,2.6 L6.4,6.1 L2.6,9.6 Z" fill="none" stroke="#666" stroke-width="1.1" stroke-linejoin="miter"/></svg>
<div class="t" style="left:43px;top:265.55px;font-size:14px;font-weight:400;color:#555;">Tích hợp QR Code sản phẩm</div>
<svg class="i" style="left:17px;top:307.4px" width="8" height="12" viewBox="0 0 8 12"><path d="M2.6,2.6 L6.4,6.1 L2.6,9.6 Z" fill="none" stroke="#666" stroke-width="1.1" stroke-linejoin="miter"/></svg>
<div class="t" style="left:43px;top:305.55px;font-size:14px;font-weight:400;color:#555;">Tích hợp QR Code điểm bán</div>
<svg class="i" style="left:17px;top:347.4px" width="8" height="12" viewBox="0 0 8 12"><path d="M2.6,2.6 L6.4,6.1 L2.6,9.6 Z" fill="none" stroke="#666" stroke-width="1.1" stroke-linejoin="miter"/></svg>
<div class="t" style="left:43px;top:345.55px;font-size:14px;font-weight:400;color:#555;">Quản lý hóa đơn</div>
<svg class="i" style="left:0;top:375px" width="40" height="35" viewBox="0 375 40 35"><g fill="none" stroke="#9a9a9a" stroke-width="0.9">
<path d="M10.6,383.6 V399.7 H29.7"/><path d="M12,392 L18.4,385.6 L22.3,387 L27.3,384.5"/><path d="M11,397.5 L14.9,394 L18.8,396.6 L23,392.3 L26.8,395.8"/>
<path d="M14,401.2 H26" stroke-dasharray="0.8 0.9" stroke-width="0.8"/></g><g fill="#9a9a9a"><circle cx="18.4" cy="385.6" r="1"/><circle cx="22.3" cy="387" r="1"/><circle cx="27.3" cy="384.5" r="1"/><circle cx="14.9" cy="394" r="1"/><circle cx="18.8" cy="396.6" r="1"/><circle cx="23" cy="392.3" r="1"/><circle cx="26.8" cy="395.8" r="1"/></g></svg>
<div class="t" style="left:43px;top:385.85px;font-size:14px;font-weight:700;color:#4a4a4a;">Tra cứu giao dịch</div>
<svg class="i" style="left:228.5px;top:388.5px" width="13" height="9" viewBox="0 0 13 9"><path d="M1.7,2.4 L6.45,7 L11.2,2.4" fill="none" stroke="#333" stroke-width="1.25"/></svg>
<svg class="i" style="left:0;top:415px" width="40" height="35" viewBox="0 415 40 35"><g fill="none" stroke="#8f8f8f" stroke-width="0.9">
<path d="M11.6,425.3 H27.9 V441.5 H11.6 Q10.6,441.5 10.6,440.5 V426.3 Q10.6,425.3 11.6,425.3 Z"/><path d="M27.9,427.7 H29.7 V440.5 Q29.7,441.5 28.7,441.5"/>
<rect x="13.2" y="430.3" width="4" height="4"/></g>
<g stroke="#b5b5b5" stroke-width="1.3" fill="none"><path d="M13,428 H24.9 M19.5,431.1 H24.9 M19.5,432.8 H24.9 M19.5,434.5 H24.9 M13,436.8 H17.2 M19.5,436.8 H24.9 M13,439.1 H17.2 M19.5,439.1 H24.9"/></g></svg>
<div class="t" style="left:43px;top:425.85px;font-size:14px;font-weight:700;color:#4a4a4a;">Báo cáo và đối soát</div>
<svg class="i" style="left:228.5px;top:428.5px" width="13" height="9" viewBox="0 0 13 9"><path d="M1.7,2.4 L6.45,7 L11.2,2.4" fill="none" stroke="#333" stroke-width="1.25"/></svg>
<svg class="i" style="left:9px;top:462px" width="22" height="22" viewBox="0 0 22 22"><g fill="none" stroke="#8f8f8f" stroke-width="1.1">
<circle cx="11" cy="11" r="9.8"/><path d="M9,9 H11.3 V16 M8.5,16 H13.8"/></g><circle cx="11" cy="6" r="1" fill="#8f8f8f"/></svg>
<div class="t" style="left:43px;top:465.85px;font-size:14px;font-weight:700;color:#4a4a4a;">Quản lý chi hộ</div>
<svg class="a" style="left:275px;top:73px" width="80" height="80" viewBox="0 0 100 100">
<defs><clipPath id="cb"><circle cx="50" cy="50" r="50"/></clipPath>
<filter id="fb" x="-20%" y="-20%" width="140%" height="140%"><feGaussianBlur stdDeviation="0.9"/></filter></defs>
<g clip-path="url(#cb)"><g filter="url(#fb)">
<rect x="-5" y="-5" width="110" height="110" fill="#c3c6c9"/><rect x="0" y="0" width="45" height="110" fill="#cdd0d3"/><rect x="60" y="10" width="26" height="70" fill="#3a4049"/><rect x="85" y="10" width="4" height="72" fill="#9aa0a6"/><rect x="89" y="0" width="16" height="100" fill="#2a2f36"/><polygon points="49,2 30,40 20,70 84,72 72,40" fill="#66756c"/><rect x="8" y="66" width="88" height="34" fill="#b89c68"/>
<circle cx="40.0" cy="26.7" r="1.3" fill="#3a4740"/><circle cx="43.9" cy="40.9" r="2.5" fill="#3a4740"/><circle cx="40.8" cy="19.4" r="1.3" fill="#c8b27a"/><circle cx="48.0" cy="11.1" r="2.5" fill="#56665c"/><circle cx="52.6" cy="47.3" r="2.0" fill="#3a4740"/><circle cx="63.3" cy="31.6" r="2.0" fill="#3a4740"/><circle cx="47.8" cy="13.9" r="2.0" fill="#56665c"/><circle cx="56.1" cy="42.5" r="2.0" fill="#56665c"/><circle cx="43.4" cy="47.8" r="2.0" fill="#56665c"/><circle cx="48.8" cy="46.5" r="2.3" fill="#c8b27a"/><circle cx="63.3" cy="36.2" r="1.6" fill="#6f7f74"/><circle cx="59.4" cy="58.2" r="1.3" fill="#b9c2bc"/><circle cx="48.9" cy="25.1" r="2.2" fill="#6f7f74"/><circle cx="60.5" cy="24.3" r="1.9" fill="#56665c"/><circle cx="46.3" cy="16.1" r="1.8" fill="#2e3a34"/><circle cx="22.9" cy="69.5" r="1.7" fill="#6f7f74"/><circle cx="48.9" cy="28.5" r="1.3" fill="#2e3a34"/><circle cx="46.0" cy="11.3" r="1.3" fill="#56665c"/><circle cx="55.9" cy="52.0" r="1.6" fill="#2e3a34"/><circle cx="54.0" cy="30.8" r="2.5" fill="#3a4740"/><circle cx="52.1" cy="28.8" r="1.3" fill="#2e3a34"/><circle cx="30.1" cy="56.5" r="1.8" fill="#b9c2bc"/><circle cx="48.8" cy="66.4" r="1.8" fill="#8a9a90"/><circle cx="63.8" cy="41.8" r="2.4" fill="#c8b27a"/><circle cx="47.0" cy="23.7" r="2.2" fill="#6f7f74"/><circle cx="41.2" cy="30.5" r="1.4" fill="#56665c"/><circle cx="43.5" cy="20.5" r="2.4" fill="#2e3a34"/><circle cx="45.1" cy="17.2" r="1.8" fill="#8a9a90"/><circle cx="50.9" cy="29.7" r="2.2" fill="#8a9a90"/><circle cx="53.3" cy="39.5" r="1.8" fill="#3a4740"/><circle cx="74.6" cy="63.4" r="1.8" fill="#c8b27a"/><circle cx="48.4" cy="31.4" r="1.3" fill="#c8b27a"/><circle cx="45.7" cy="9.5" r="1.4" fill="#8a9a90"/><circle cx="32.5" cy="45.2" r="2.0" fill="#8a9a90"/><circle cx="55.9" cy="68.6" r="2.4" fill="#56665c"/><circle cx="34.2" cy="46.1" r="2.5" fill="#c9d0cc"/><circle cx="47.9" cy="45.4" r="2.4" fill="#56665c"/><circle cx="46.8" cy="71.5" r="1.6" fill="#2e3a34"/><circle cx="52.9" cy="14.7" r="1.9" fill="#c9d0cc"/><circle cx="49.8" cy="51.4" r="2.5" fill="#b9c2bc"/><circle cx="35.8" cy="40.4" r="2.3" fill="#3a4740"/><circle cx="52.5" cy="25.0" r="2.2" fill="#56665c"/><circle cx="46.0" cy="22.5" r="1.7" fill="#8a9a90"/><circle cx="49.8" cy="19.9" r="2.1" fill="#6f7f74"/><circle cx="61.2" cy="46.1" r="2.3" fill="#b9c2bc"/><circle cx="61.9" cy="59.8" r="1.5" fill="#b9c2bc"/><circle cx="57.2" cy="38.0" r="2.3" fill="#3a4740"/><circle cx="38.5" cy="36.6" r="1.8" fill="#6f7f74"/><circle cx="78.5" cy="67.8" r="1.3" fill="#6f7f74"/><circle cx="48.6" cy="11.8" r="1.5" fill="#6f7f74"/><circle cx="66.1" cy="46.8" r="1.9" fill="#3a4740"/><circle cx="62.3" cy="48.7" r="2.4" fill="#56665c"/><circle cx="47.4" cy="13.0" r="1.9" fill="#b9c2bc"/><circle cx="54.1" cy="17.0" r="1.3" fill="#6f7f74"/><circle cx="62.5" cy="68.4" r="1.8" fill="#2e3a34"/><circle cx="62.7" cy="68.4" r="2.6" fill="#8a9a90"/><circle cx="49.8" cy="6.8" r="2.3" fill="#2e3a34"/><circle cx="54.2" cy="14.8" r="2.1" fill="#2e3a34"/><circle cx="50.3" cy="28.5" r="1.2" fill="#8a9a90"/><circle cx="60.9" cy="58.6" r="1.9" fill="#56665c"/><circle cx="45.0" cy="67.6" r="2.4" fill="#b9c2bc"/><circle cx="44.1" cy="19.1" r="1.9" fill="#c9d0cc"/><circle cx="40.2" cy="56.2" r="2.4" fill="#c8b27a"/><circle cx="51.7" cy="9.1" r="2.1" fill="#2e3a34"/><circle cx="49.9" cy="59.6" r="1.9" fill="#8a9a90"/><circle cx="31.1" cy="40.1" r="2.3" fill="#2e3a34"/><circle cx="60.6" cy="45.8" r="1.4" fill="#8a9a90"/><circle cx="56.7" cy="36.7" r="1.7" fill="#3a4740"/><circle cx="51.0" cy="39.7" r="2.4" fill="#56665c"/><circle cx="45.6" cy="8.8" r="2.3" fill="#3a4740"/><circle cx="51.2" cy="39.0" r="1.8" fill="#56665c"/><circle cx="49.2" cy="46.0" r="2.2" fill="#b9c2bc"/><circle cx="50.1" cy="35.3" r="1.9" fill="#2e3a34"/><circle cx="49.5" cy="21.6" r="2.5" fill="#c9d0cc"/><circle cx="31.8" cy="64.8" r="1.4" fill="#2e3a34"/><circle cx="48.2" cy="13.1" r="2.1" fill="#56665c"/><circle cx="39.9" cy="33.7" r="2.3" fill="#c9d0cc"/><circle cx="28.9" cy="65.1" r="1.4" fill="#6f7f74"/><circle cx="75.8" cy="64.1" r="2.2" fill="#b9c2bc"/><circle cx="54.0" cy="11.3" r="2.6" fill="#8a9a90"/><circle cx="30.5" cy="60.8" r="2.6" fill="#c8b27a"/><circle cx="46.6" cy="32.1" r="1.6" fill="#6f7f74"/><circle cx="25.8" cy="53.4" r="1.8" fill="#2e3a34"/><circle cx="47.5" cy="6.2" r="1.9" fill="#c9d0cc"/><circle cx="54.5" cy="9.3" r="2.6" fill="#b9c2bc"/><circle cx="45.8" cy="12.0" r="2.5" fill="#3a4740"/><circle cx="53.6" cy="17.2" r="2.4" fill="#c8b27a"/><circle cx="69.4" cy="50.3" r="1.4" fill="#c8b27a"/><circle cx="53.2" cy="66.6" r="1.3" fill="#6f7f74"/><circle cx="51.1" cy="8.9" r="2.5" fill="#c8b27a"/><circle cx="38.0" cy="23.0" r="2.3" fill="#56665c"/><circle cx="53.4" cy="10.6" r="1.6" fill="#56665c"/><circle cx="41.9" cy="13.2" r="2.5" fill="#c8b27a"/><circle cx="40.6" cy="22.9" r="2.5" fill="#b9c2bc"/><circle cx="34.2" cy="69.9" r="1.5" fill="#8a9a90"/><circle cx="44.1" cy="25.9" r="1.6" fill="#b9c2bc"/><circle cx="37.5" cy="38.5" r="2.3" fill="#6f7f74"/><circle cx="19.5" cy="71.6" r="2.2" fill="#3a4740"/><circle cx="37.0" cy="41.9" r="1.5" fill="#2e3a34"/><circle cx="54.2" cy="35.0" r="2.1" fill="#c8b27a"/><circle cx="63.9" cy="41.6" r="2.2" fill="#c9d0cc"/><circle cx="39.1" cy="70.8" r="1.8" fill="#8a9a90"/><circle cx="36.9" cy="28.3" r="1.2" fill="#8a9a90"/><circle cx="65.3" cy="46.9" r="1.4" fill="#c8b27a"/><circle cx="53.2" cy="10.7" r="2.0" fill="#c9d0cc"/><circle cx="27.8" cy="51.4" r="1.4" fill="#8a9a90"/><circle cx="41.2" cy="34.9" r="2.6" fill="#6f7f74"/><circle cx="39.2" cy="41.7" r="1.5" fill="#c9d0cc"/><circle cx="46.0" cy="17.3" r="1.9" fill="#56665c"/><circle cx="38.2" cy="38.7" r="1.3" fill="#3a4740"/><circle cx="29.9" cy="59.7" r="1.8" fill="#3a4740"/><circle cx="52.2" cy="25.1" r="2.0" fill="#56665c"/><circle cx="58.4" cy="40.5" r="2.3" fill="#c8b27a"/><circle cx="48.7" cy="53.3" r="2.2" fill="#c9d0cc"/><circle cx="29.0" cy="48.1" r="2.2" fill="#c8b27a"/><circle cx="29.7" cy="59.4" r="2.4" fill="#3a4740"/><circle cx="64.9" cy="44.1" r="1.3" fill="#b9c2bc"/><circle cx="50.4" cy="7.8" r="1.7" fill="#56665c"/><circle cx="34.1" cy="35.2" r="2.1" fill="#3a4740"/><circle cx="48.5" cy="50.6" r="1.8" fill="#3a4740"/><circle cx="54.0" cy="9.7" r="2.1" fill="#56665c"/><circle cx="51.7" cy="9.4" r="2.3" fill="#c9d0cc"/><circle cx="34.3" cy="61.7" r="1.5" fill="#b9c2bc"/><circle cx="47.2" cy="48.5" r="1.3" fill="#c8b27a"/><circle cx="36.5" cy="66.0" r="2.1" fill="#3a4740"/><circle cx="30.5" cy="48.1" r="1.7" fill="#8a9a90"/><circle cx="57.6" cy="48.7" r="1.2" fill="#8a9a90"/><circle cx="46.4" cy="9.1" r="2.2" fill="#56665c"/><circle cx="39.4" cy="50.3" r="1.9" fill="#c9d0cc"/><circle cx="36.1" cy="36.2" r="1.6" fill="#b9c2bc"/><circle cx="48.7" cy="10.8" r="1.8" fill="#c9d0cc"/><circle cx="74.2" cy="59.9" r="2.6" fill="#2e3a34"/><circle cx="61.3" cy="30.9" r="1.3" fill="#b9c2bc"/><circle cx="52.2" cy="11.1" r="2.5" fill="#c9d0cc"/><circle cx="53.8" cy="13.9" r="2.4" fill="#c9d0cc"/><circle cx="36.3" cy="52.1" r="1.8" fill="#2e3a34"/><circle cx="56.5" cy="15.7" r="1.8" fill="#2e3a34"/><circle cx="44.9" cy="53.7" r="1.6" fill="#c8b27a"/><circle cx="21.6" cy="61.3" r="2.4" fill="#6f7f74"/><circle cx="55.2" cy="13.0" r="2.5" fill="#3a4740"/><circle cx="45.9" cy="24.4" r="1.7" fill="#c8b27a"/><circle cx="25.0" cy="63.3" r="2.3" fill="#c8b27a"/><circle cx="36.8" cy="62.2" r="2.4" fill="#3a4740"/><circle cx="59.3" cy="24.1" r="2.6" fill="#b9c2bc"/><circle cx="43.1" cy="34.2" r="2.3" fill="#6f7f74"/><circle cx="34.0" cy="33.7" r="2.5" fill="#c8b27a"/><circle cx="52.0" cy="68.0" r="1.3" fill="#56665c"/><circle cx="46.6" cy="54.1" r="2.1" fill="#8a9a90"/><circle cx="38.3" cy="24.2" r="1.4" fill="#8a9a90"/><circle cx="42.2" cy="32.8" r="2.2" fill="#c9d0cc"/><circle cx="34.0" cy="70.4" r="1.6" fill="#b9c2bc"/><circle cx="44.9" cy="42.3" r="2.1" fill="#8a9a90"/><circle cx="49.0" cy="10.0" r="2.0" fill="#2e3a34"/><circle cx="43.5" cy="35.4" r="1.8" fill="#2e3a34"/><circle cx="39.1" cy="41.7" r="1.7" fill="#8a9a90"/><circle cx="45.7" cy="11.1" r="2.3" fill="#c9d0cc"/><circle cx="39.9" cy="18.5" r="1.7" fill="#c8b27a"/><circle cx="34.6" cy="55.0" r="1.7" fill="#c9d0cc"/><circle cx="46.5" cy="9.2" r="1.4" fill="#6f7f74"/><circle cx="53.7" cy="38.7" r="1.3" fill="#b9c2bc"/><circle cx="42.3" cy="65.1" r="1.8" fill="#2e3a34"/><circle cx="56.9" cy="25.9" r="1.4" fill="#3a4740"/><circle cx="57.3" cy="33.5" r="2.6" fill="#2e3a34"/><circle cx="34.0" cy="37.8" r="2.6" fill="#2e3a34"/><circle cx="40.5" cy="21.6" r="1.4" fill="#8a9a90"/><circle cx="24.6" cy="70.1" r="1.3" fill="#2e3a34"/><circle cx="23.4" cy="57.0" r="1.5" fill="#8a9a90"/><circle cx="57.7" cy="66.6" r="2.5" fill="#c9d0cc"/><circle cx="50.2" cy="47.0" r="2.2" fill="#c8b27a"/><circle cx="43.0" cy="12.5" r="1.7" fill="#b9c2bc"/><circle cx="51.0" cy="20.0" r="2.0" fill="#3a4740"/><circle cx="34.9" cy="71.8" r="2.1" fill="#6f7f74"/><circle cx="47.6" cy="64.2" r="2.0" fill="#b9c2bc"/><circle cx="48.2" cy="7.0" r="1.3" fill="#c9d0cc"/><circle cx="56.2" cy="18.0" r="1.3" fill="#c8b27a"/><circle cx="47.4" cy="20.3" r="1.5" fill="#6f7f74"/><circle cx="47.4" cy="7.3" r="1.7" fill="#c8b27a"/><circle cx="34.2" cy="31.6" r="2.2" fill="#c9d0cc"/><circle cx="38.4" cy="38.8" r="1.6" fill="#b9c2bc"/><circle cx="34.5" cy="59.9" r="1.6" fill="#b9c2bc"/><circle cx="26.4" cy="64.6" r="2.1" fill="#2e3a34"/><circle cx="48.1" cy="65.1" r="2.5" fill="#3a4740"/><circle cx="47.3" cy="14.8" r="1.2" fill="#b9c2bc"/><circle cx="45.5" cy="44.9" r="1.5" fill="#3a4740"/><circle cx="56.0" cy="35.1" r="2.2" fill="#6f7f74"/><circle cx="76.5" cy="71.8" r="1.5" fill="#6f7f74"/><circle cx="50.1" cy="48.7" r="1.2" fill="#2e3a34"/><circle cx="43.5" cy="49.5" r="2.6" fill="#6f7f74"/><circle cx="36.3" cy="34.6" r="1.6" fill="#56665c"/><circle cx="61.5" cy="28.5" r="2.0" fill="#56665c"/><circle cx="43.0" cy="55.8" r="2.4" fill="#c9d0cc"/><circle cx="34.6" cy="34.0" r="1.5" fill="#2e3a34"/><circle cx="47.0" cy="41.3" r="1.7" fill="#6f7f74"/><circle cx="21.7" cy="65.1" r="1.5" fill="#c8b27a"/><circle cx="44.9" cy="46.9" r="1.2" fill="#c8b27a"/><circle cx="53.7" cy="9.2" r="1.5" fill="#c9d0cc"/><circle cx="50.2" cy="9.2" r="1.6" fill="#6f7f74"/><circle cx="56.2" cy="69.2" r="2.2" fill="#c9d0cc"/><circle cx="68.7" cy="51.2" r="1.2" fill="#c9d0cc"/><circle cx="69.9" cy="55.6" r="1.2" fill="#56665c"/><circle cx="48.5" cy="20.7" r="2.5" fill="#2e3a34"/><circle cx="41.7" cy="30.9" r="2.3" fill="#c8b27a"/><circle cx="48.9" cy="13.9" r="2.3" fill="#3a4740"/><circle cx="64.9" cy="54.5" r="2.1" fill="#8a9a90"/><circle cx="44.3" cy="27.0" r="2.3" fill="#6f7f74"/><circle cx="49.5" cy="44.9" r="2.3" fill="#c8b27a"/><circle cx="39.6" cy="21.6" r="1.9" fill="#3a4740"/><circle cx="36.0" cy="41.5" r="2.4" fill="#c8b27a"/><circle cx="34.1" cy="71.2" r="1.5" fill="#56665c"/><circle cx="64.3" cy="33.2" r="1.4" fill="#2e3a34"/><circle cx="48.4" cy="13.9" r="2.2" fill="#b9c2bc"/><circle cx="58.1" cy="61.7" r="2.3" fill="#56665c"/><circle cx="43.7" cy="24.7" r="1.7" fill="#c9d0cc"/><circle cx="34.2" cy="54.5" r="1.5" fill="#b9c2bc"/><circle cx="44.4" cy="20.8" r="1.7" fill="#b9c2bc"/><circle cx="63.8" cy="31.5" r="2.1" fill="#b9c2bc"/><circle cx="48.5" cy="11.7" r="1.3" fill="#3a4740"/><circle cx="60.0" cy="36.8" r="2.5" fill="#2e3a34"/><circle cx="46.9" cy="7.7" r="1.3" fill="#56665c"/><circle cx="62.6" cy="45.2" r="2.5" fill="#b9c2bc"/><circle cx="59.5" cy="29.9" r="2.0" fill="#2e3a34"/><circle cx="57.5" cy="56.9" r="1.3" fill="#3a4740"/><circle cx="53.9" cy="44.9" r="1.3" fill="#b9c2bc"/><circle cx="36.8" cy="27.8" r="1.3" fill="#c9d0cc"/><circle cx="69.2" cy="54.1" r="2.3" fill="#3a4740"/><circle cx="45.1" cy="32.4" r="1.3" fill="#c9d0cc"/><circle cx="49.0" cy="7.1" r="1.3" fill="#2e3a34"/><circle cx="47.6" cy="11.8" r="2.1" fill="#8a9a90"/><circle cx="44.7" cy="11.1" r="1.8" fill="#c9d0cc"/><circle cx="44.5" cy="24.0" r="1.6" fill="#3a4740"/><circle cx="43.3" cy="43.0" r="1.2" fill="#c8b27a"/><circle cx="64.4" cy="56.4" r="1.7" fill="#b9c2bc"/><circle cx="62.5" cy="32.1" r="2.5" fill="#c8b27a"/><circle cx="59.1" cy="33.4" r="2.0" fill="#c8b27a"/><circle cx="56.7" cy="29.4" r="1.2" fill="#8a9a90"/><circle cx="54.4" cy="42.0" r="1.3" fill="#c8b27a"/><circle cx="43.5" cy="46.7" r="1.4" fill="#8a9a90"/><circle cx="49.5" cy="24.0" r="1.4" fill="#56665c"/><circle cx="59.8" cy="37.9" r="1.6" fill="#b9c2bc"/><circle cx="24.0" cy="61.1" r="1.6" fill="#2e3a34"/><circle cx="54.7" cy="45.7" r="2.5" fill="#56665c"/><circle cx="62.8" cy="46.6" r="2.1" fill="#8a9a90"/><circle cx="55.8" cy="62.4" r="2.4" fill="#b9c2bc"/><circle cx="43.9" cy="17.3" r="2.5" fill="#c8b27a"/><circle cx="46.7" cy="15.5" r="1.5" fill="#8a9a90"/><circle cx="68.3" cy="53.6" r="2.4" fill="#3a4740"/><circle cx="58.5" cy="61.4" r="1.4" fill="#6f7f74"/><circle cx="51.1" cy="45.2" r="2.1" fill="#c9d0cc"/><circle cx="42.7" cy="25.7" r="2.1" fill="#c8b27a"/><circle cx="47.0" cy="34.9" r="1.2" fill="#3a4740"/><circle cx="46.8" cy="71.1" r="2.3" fill="#2e3a34"/><circle cx="46.8" cy="57.3" r="2.3" fill="#8a9a90"/><circle cx="35.9" cy="31.8" r="1.8" fill="#6f7f74"/><circle cx="48.3" cy="11.1" r="1.3" fill="#3a4740"/><circle cx="55.3" cy="13.7" r="2.3" fill="#6f7f74"/><circle cx="32.7" cy="39.3" r="2.1" fill="#c8b27a"/><circle cx="24.4" cy="57.5" r="2.6" fill="#56665c"/><circle cx="64.4" cy="54.0" r="1.4" fill="#b9c2bc"/><circle cx="36.8" cy="64.3" r="2.2" fill="#8a9a90"/><circle cx="35.5" cy="53.3" r="2.1" fill="#6f7f74"/><circle cx="36.6" cy="74.6" r="3.0" fill="#e8d8a8"/><circle cx="30.8" cy="81.5" r="1.9" fill="#d8d0c0"/><circle cx="51.5" cy="74.9" r="2.1" fill="#c8b080"/><circle cx="43.1" cy="72.8" r="2.7" fill="#e8d8a8"/><circle cx="23.8" cy="96.4" r="1.7" fill="#e8d8a8"/><circle cx="62.2" cy="84.0" r="3.1" fill="#c8b080"/><circle cx="52.8" cy="81.4" r="1.9" fill="#a08050"/><circle cx="80.2" cy="84.2" r="2.0" fill="#c8b080"/><circle cx="57.3" cy="99.7" r="2.1" fill="#c8b080"/><circle cx="28.9" cy="68.8" r="2.0" fill="#b89a64"/><circle cx="35.4" cy="83.5" r="2.7" fill="#c8b080"/><circle cx="28.2" cy="91.4" r="2.5" fill="#e8d8a8"/><circle cx="52.0" cy="80.7" r="1.7" fill="#b89a64"/><circle cx="63.6" cy="73.7" r="1.6" fill="#b89a64"/><circle cx="34.9" cy="85.3" r="2.4" fill="#c8b080"/><circle cx="34.7" cy="80.1" r="1.8" fill="#d0b880"/><circle cx="48.9" cy="87.2" r="1.5" fill="#d0b880"/><circle cx="68.0" cy="93.3" r="1.7" fill="#d8d0c0"/><circle cx="81.4" cy="87.7" r="2.2" fill="#e8d8a8"/><circle cx="10.9" cy="75.0" r="2.5" fill="#c8b080"/><circle cx="59.4" cy="85.7" r="1.9" fill="#d8d0c0"/><circle cx="13.6" cy="96.7" r="2.2" fill="#b89a64"/><circle cx="14.8" cy="74.1" r="1.5" fill="#a08050"/><circle cx="87.2" cy="84.7" r="2.2" fill="#d0b880"/><circle cx="62.7" cy="83.6" r="2.9" fill="#7a6040"/><circle cx="35.4" cy="71.9" r="2.6" fill="#e8d8a8"/><circle cx="69.4" cy="99.8" r="2.7" fill="#d8d0c0"/><circle cx="79.2" cy="66.2" r="1.6" fill="#d8d0c0"/><circle cx="24.4" cy="88.3" r="1.9" fill="#a08050"/><circle cx="20.1" cy="87.9" r="2.7" fill="#e8d8a8"/><circle cx="55.4" cy="75.0" r="2.7" fill="#7a6040"/><circle cx="89.7" cy="97.2" r="2.6" fill="#e8d8a8"/><circle cx="27.8" cy="98.8" r="1.8" fill="#b89a64"/><circle cx="79.0" cy="96.8" r="3.1" fill="#8a4a3a"/><circle cx="36.8" cy="91.4" r="2.1" fill="#7a6040"/><circle cx="84.4" cy="74.1" r="2.3" fill="#d8d0c0"/><circle cx="10.5" cy="84.0" r="2.2" fill="#b89a64"/><circle cx="56.8" cy="90.6" r="2.8" fill="#e8d8a8"/><circle cx="58.0" cy="79.3" r="1.7" fill="#d0b880"/><circle cx="18.7" cy="66.9" r="2.1" fill="#d0b880"/><circle cx="12.4" cy="70.8" r="1.7" fill="#b89a64"/><circle cx="13.5" cy="87.9" r="2.8" fill="#a08050"/><circle cx="58.4" cy="68.2" r="1.8" fill="#c8b080"/><circle cx="53.8" cy="98.5" r="3.0" fill="#a08050"/><circle cx="68.3" cy="91.7" r="1.7" fill="#7a6040"/><circle cx="19.2" cy="73.0" r="3.1" fill="#b89a64"/><circle cx="71.8" cy="97.0" r="2.9" fill="#a08050"/><circle cx="33.6" cy="87.5" r="1.7" fill="#a08050"/><circle cx="63.0" cy="92.9" r="2.0" fill="#e8d8a8"/><circle cx="11.7" cy="80.4" r="3.1" fill="#e8d8a8"/><circle cx="72.3" cy="67.6" r="2.8" fill="#c8b080"/><circle cx="49.0" cy="86.5" r="2.6" fill="#e8d8a8"/><circle cx="43.9" cy="67.1" r="2.4" fill="#7a6040"/><circle cx="48.5" cy="69.3" r="2.4" fill="#b89a64"/><circle cx="80.7" cy="73.4" r="2.5" fill="#a08050"/><circle cx="45.8" cy="75.8" r="2.0" fill="#8a4a3a"/><circle cx="14.4" cy="91.5" r="2.3" fill="#c8b080"/><circle cx="75.3" cy="82.7" r="3.1" fill="#d0b880"/><circle cx="88.5" cy="86.1" r="2.5" fill="#e8d8a8"/><circle cx="76.8" cy="71.4" r="2.3" fill="#8a4a3a"/><circle cx="62.2" cy="69.7" r="2.3" fill="#a08050"/><circle cx="56.0" cy="99.7" r="2.6" fill="#a08050"/><circle cx="42.9" cy="78.1" r="3.0" fill="#7a6040"/><circle cx="44.6" cy="91.3" r="2.1" fill="#b89a64"/><circle cx="45.1" cy="76.3" r="2.1" fill="#d0b880"/><circle cx="29.2" cy="96.1" r="1.7" fill="#d8d0c0"/><circle cx="66.5" cy="86.2" r="2.1" fill="#b89a64"/><circle cx="22.7" cy="77.1" r="2.6" fill="#d8d0c0"/><circle cx="23.9" cy="91.2" r="2.7" fill="#d8d0c0"/><circle cx="28.9" cy="74.7" r="2.3" fill="#c8b080"/><circle cx="29.5" cy="96.1" r="2.0" fill="#8a4a3a"/><circle cx="77.8" cy="91.7" r="2.7" fill="#d0b880"/><circle cx="69.3" cy="99.1" r="1.8" fill="#c8b080"/><circle cx="25.5" cy="77.2" r="1.8" fill="#a08050"/><circle cx="26.0" cy="88.4" r="3.2" fill="#d0b880"/><circle cx="70.1" cy="93.0" r="2.0" fill="#7a6040"/><circle cx="84.7" cy="69.7" r="1.9" fill="#e8d8a8"/><circle cx="12.8" cy="79.2" r="3.0" fill="#7a6040"/><circle cx="28.2" cy="80.8" r="2.3" fill="#e8d8a8"/><circle cx="59.5" cy="70.8" r="1.5" fill="#7a6040"/><circle cx="79.9" cy="74.2" r="2.9" fill="#7a6040"/><circle cx="63.5" cy="88.7" r="2.7" fill="#8a4a3a"/><circle cx="47.2" cy="87.8" r="1.9" fill="#c8b080"/><circle cx="83.4" cy="89.8" r="2.8" fill="#8a4a3a"/><circle cx="61.6" cy="90.2" r="2.9" fill="#e8d8a8"/><circle cx="11.6" cy="82.4" r="2.4" fill="#7a6040"/><circle cx="81.6" cy="88.5" r="2.8" fill="#c8b080"/><circle cx="50.2" cy="79.2" r="1.6" fill="#a08050"/><circle cx="23.2" cy="84.5" r="2.4" fill="#8a4a3a"/><circle cx="57.1" cy="69.4" r="2.7" fill="#8a4a3a"/><circle cx="62.4" cy="83.4" r="2.4" fill="#c8b080"/><circle cx="87.7" cy="80.0" r="3.2" fill="#8a4a3a"/><circle cx="52.1" cy="72.2" r="2.7" fill="#a08050"/><circle cx="62.3" cy="86.9" r="2.0" fill="#e8d8a8"/><circle cx="11.1" cy="79.6" r="3.1" fill="#7a6040"/><circle cx="65.3" cy="87.4" r="1.7" fill="#e8d8a8"/><circle cx="42.8" cy="76.3" r="3.2" fill="#8a4a3a"/><circle cx="47.9" cy="98.7" r="1.7" fill="#d0b880"/><circle cx="76.4" cy="92.4" r="2.3" fill="#8a4a3a"/><circle cx="28.5" cy="85.1" r="2.1" fill="#d0b880"/><circle cx="77.1" cy="87.7" r="2.3" fill="#7a6040"/><circle cx="55.0" cy="76.0" r="2.8" fill="#d0b880"/><circle cx="74.3" cy="82.0" r="2.0" fill="#8a4a3a"/><circle cx="30.8" cy="78.8" r="2.7" fill="#7a6040"/><circle cx="76.0" cy="82.4" r="2.1" fill="#e8d8a8"/><circle cx="36.3" cy="88.2" r="2.2" fill="#d8d0c0"/><circle cx="64.1" cy="87.7" r="1.8" fill="#c8b080"/><circle cx="41.6" cy="76.3" r="2.9" fill="#a08050"/><circle cx="74.3" cy="96.8" r="2.4" fill="#d0b880"/><circle cx="57.8" cy="77.7" r="1.9" fill="#b89a64"/><circle cx="34.0" cy="68.4" r="2.5" fill="#a08050"/><circle cx="25.2" cy="95.0" r="2.1" fill="#d8d0c0"/><circle cx="84.1" cy="71.2" r="2.5" fill="#d0b880"/><circle cx="90.1" cy="89.4" r="2.6" fill="#a08050"/><circle cx="74.6" cy="96.4" r="1.8" fill="#e8d8a8"/><circle cx="53.5" cy="89.6" r="2.6" fill="#d8d0c0"/><circle cx="19.7" cy="70.0" r="1.9" fill="#7a6040"/><circle cx="50.4" cy="70.7" r="2.3" fill="#b89a64"/><circle cx="67.4" cy="96.8" r="2.3" fill="#8a4a3a"/><circle cx="80.8" cy="84.3" r="1.8" fill="#b89a64"/><circle cx="67.1" cy="76.9" r="2.6" fill="#d8d0c0"/><circle cx="40.7" cy="94.6" r="3.2" fill="#7a6040"/><circle cx="24.8" cy="89.0" r="2.6" fill="#c8b080"/><circle cx="60.0" cy="67.0" r="2.9" fill="#c8b080"/><circle cx="49.7" cy="69.2" r="1.6" fill="#d0b880"/><circle cx="61.3" cy="90.4" r="1.7" fill="#c8b080"/><circle cx="38.0" cy="88.4" r="2.0" fill="#8a4a3a"/><circle cx="30.6" cy="77.6" r="2.9" fill="#b89a64"/><circle cx="77.9" cy="76.0" r="2.1" fill="#7a6040"/><circle cx="81.6" cy="99.5" r="3.2" fill="#c8b080"/><circle cx="74.9" cy="88.3" r="1.8" fill="#c8b080"/><circle cx="20.5" cy="90.2" r="2.8" fill="#a08050"/><circle cx="69.3" cy="67.4" r="2.4" fill="#7a6040"/><circle cx="34.6" cy="67.7" r="1.6" fill="#b89a64"/><circle cx="49.0" cy="93.9" r="2.8" fill="#b89a64"/><circle cx="60.2" cy="96.9" r="2.6" fill="#d0b880"/><circle cx="58.9" cy="89.7" r="1.9" fill="#a08050"/><circle cx="47.5" cy="88.7" r="1.7" fill="#d0b880"/><circle cx="13.0" cy="72.2" r="3.1" fill="#a08050"/><circle cx="40.2" cy="88.3" r="2.8" fill="#d0b880"/>
<ellipse cx="50" cy="101" rx="35" ry="5" fill="#e8e2d4"/>
</g></g></svg>
<div class="t" style="left:375px;top:88.87px;font-size:20px;font-weight:700;color:#fff;">Nguyễn Ngọc Bảo</div>
<div class="t" style="left:375px;top:117.15px;font-size:14px;font-weight:400;color:#fff;">Đăng nhập lần cuối vào 13:48:39 18/11/2025</div>
<div class="t" style="left:1557px;top:84.15px;font-size:14px;font-weight:400;color:#fff;transform:translateX(-100%);">Số dư khả dụng</div>
<div class="t" style="left:1557px;top:100.83px;font-size:25px;font-weight:700;color:#fff;transform:translateX(-100%);">157.147 VND</div>
<div class="card" style="left:275px;top:173px;width:388.5px;height:92px"></div>
<div class="box" style="left:355.5px;top:178px;width:1px;height:79px;background:#8cc4f0"></div>
<div class="t" style="left:366px;top:191.85px;font-size:14px;font-weight:400;color:#333;">Doanh thu trong ngày</div>
<div class="t" style="left:367px;top:213.68px;font-size:24px;font-weight:700;color:#0d94fa;">10.000 VND</div>
<div class="card" style="left:683.5px;top:173px;width:388.5px;height:92px"></div>
<div class="box" style="left:764.0px;top:178px;width:1px;height:79px;background:#8cc4f0"></div>
<div class="t" style="left:774.5px;top:191.85px;font-size:14px;font-weight:400;color:#333;">GD thành công trong ngày</div>
<div class="t" style="left:775.5px;top:213.68px;font-size:24px;font-weight:700;color:#0d94fa;">1</div>
<div class="card" style="left:1092px;top:173px;width:388.5px;height:92px"></div>
<div class="box" style="left:1172.5px;top:178px;width:1px;height:79px;background:#8cc4f0"></div>
<div class="t" style="left:1183px;top:191.85px;font-size:14px;font-weight:400;color:#333;">Tỷ lệ giao dịch thành công</div>
<div class="t" style="left:1184px;top:213.68px;font-size:24px;font-weight:700;color:#0d94fa;">100%</div>
<div class="card" style="left:1500.5px;top:173px;width:388.5px;height:92px"></div>
<div class="box" style="left:1581.0px;top:178px;width:1px;height:79px;background:#8cc4f0"></div>
<div class="t" style="left:1591.5px;top:191.85px;font-size:14px;font-weight:400;color:#333;">Tổng số khách hàng</div>
<div class="t" style="left:1592.5px;top:213.68px;font-size:24px;font-weight:700;color:#0d94fa;">1</div>
<svg class="i" style="left:0;top:0" width="1910" height="300" viewBox="0 0 1910 300"><g fill="none" stroke="#0b7fcb" stroke-linecap="round" stroke-linejoin="round">
<circle cx="314.5" cy="217.2" r="27.6" stroke-width="3.3"/>
<path d="M314.5,200.3 V206 M321.4,206 H314.5 A6.6,5.75 0 0 0 314.5,217.5 A6.3,5.55 0 0 1 314.5,228.6 H308.1 M314.5,228.6 V234.4" stroke-width="3.2"/>
<circle cx="723.5" cy="217.2" r="27.6" stroke-width="3.3"/>
<path d="M711.5,219.4 L719.1,227 L737.4,208.4" stroke-width="3.3"/>
<path d="M1117,228 A18.7,18.7 0 1 1 1134,226.4" stroke-width="2.7"/>
<path d="M1124.7,200.3 V202.8 M1124.7,220.2 V222.8" stroke-width="2.5"/>
<path d="M1129,206 Q1129,203 1124.7,203 Q1120.6,203 1120.6,206.3 Q1120.6,209.6 1124.7,211.2 Q1129,212.8 1129,216.4 Q1129,219.8 1124.7,219.8 Q1120.4,219.8 1120.4,216.6" stroke-width="2.5"/>
<path d="M1105.9,240.5 L1126.3,229.3 L1140.4,236.7 L1157.6,222 M1146.2,222 H1157.6 V233.8" stroke-width="2.7"/>
<path d="M1538.2,204.2 C1536,202.2 1536,199.7 1536,197.0 C1536,193.2 1538,191.2 1541,191.2 C1544,191.2 1546,193.2 1546,197.0 C1546,199.7 1546,202.2 1543.8,204.2 L1544,206.5 Q1551.2,208.7 1551.4,212.2 V214.39999999999998 M1538.2,204.2 L1538,206.5 Q1530.8,208.7 1530.6,212.2 V214.39999999999998 M1520.2,232.4 C1518,230.4 1518,227.9 1518,225.20000000000002 C1518,221.4 1520,219.4 1523,219.4 C1526,219.4 1528,221.4 1528,225.20000000000002 C1528,227.9 1528,230.4 1525.8,232.4 L1526,234.70000000000002 Q1533.2,236.9 1533.4,240.4 V242.6 M1520.2,232.4 L1520,234.70000000000002 Q1512.8,236.9 1512.6,240.4 V242.6 M1556.6000000000001,232.4 C1554.4,230.4 1554.4,227.9 1554.4,225.20000000000002 C1554.4,221.4 1556.4,219.4 1559.4,219.4 C1562.4,219.4 1564.4,221.4 1564.4,225.20000000000002 C1564.4,227.9 1564.4,230.4 1562.2,232.4 L1562.4,234.70000000000002 Q1569.6000000000001,236.9 1569.8000000000002,240.4 V242.6 M1556.6000000000001,232.4 L1556.4,234.70000000000002 Q1549.2,236.9 1549.0,240.4 V242.6" stroke-width="2.5"/>
<path d="M1541.2,214 V216.6 M1541.2,231.8 V234.4" stroke-width="2.4"/>
<path d="M1545,219.2 Q1545,216.8 1541.2,216.8 Q1537.4,216.8 1537.4,219.6 Q1537.4,222.4 1541.2,223.6 Q1545,224.8 1545,228 Q1545,231.4 1541.2,231.4 Q1537.4,231.4 1537.4,229" stroke-width="2.4"/>
</g></svg>
<div class="box" style="left:6px;top:214.8px;width:232px;height:37px;border:3px solid #ff0000;border-radius:2.5px"></div>
<svg class="i" style="left:230px;top:220px" width="70" height="25" viewBox="230 220 70 25"><path d="M252,232.4 H291.4" stroke="#ff0000" stroke-width="3.3" stroke-linecap="round"/><path d="M239.7,232.4 L254.6,228 L253.6,232.4 L254.6,236.9 Z" fill="#ff0000" stroke="#ff0000" stroke-width="0.8" stroke-linejoin="round"/></svg>
<div class="card" style="left:275px;top:285px;width:528px;height:385px"></div>
<div class="t" style="left:295px;top:306.45px;font-size:16px;font-weight:400;color:#137fcc;">THÔNG TIN SỐ DƯ</div>
<div class="box" style="left:295px;top:333px;width:488px;height:1px;background:#e4e4e4"></div>
<div class="t" style="left:295px;top:363.55px;font-size:14px;font-weight:400;color:#333;">Tổng số dư</div>
<div class="t" style="left:783px;top:363.65px;font-size:14.7px;font-weight:400;color:#333;transform:translateX(-100%);">186.998 VND</div>
<div class="t" style="left:295px;top:396.55px;font-size:14px;font-weight:400;color:#333;">Số dư khả dụng</div>
<div class="t" style="left:783px;top:396.55px;font-size:14.7px;font-weight:400;color:#333;transform:translateX(-100%);">157.147 VND</div>
<div class="t" style="left:295px;top:429.55px;font-size:14px;font-weight:400;color:#333;">Số dư đóng băng</div>
<div class="t" style="left:783px;top:429.45px;font-size:14.7px;font-weight:400;color:#333;transform:translateX(-100%);">29.851 VND</div>
<div class="box" style="left:458px;top:614px;width:162px;height:40px;background:#e8e8e8;border-radius:4px"></div>
<div class="t" style="left:539px;top:625.95px;font-size:16px;font-weight:400;color:#111;transform:translateX(-50%);">RÚT TIỀN</div>
<div class="card" style="left:823px;top:285px;width:1066px;height:385px"></div>
<div class="t" style="left:843px;top:306.45px;font-size:16px;font-weight:400;color:#137fcc;">DOANH SỐ BÁN HÀNG</div>
<div class="t" style="left:1792.5px;top:302.45px;font-size:16px;font-weight:400;color:#222;">Theo ngày</div>
<svg class="i" style="left:1875px;top:304px" width="12" height="10" viewBox="0 0 12 10"><path d="M2,2.5 L6,6.5 L10,2.5" fill="none" stroke="#222" stroke-width="2"/></svg>
<div class="box" style="left:843px;top:332.5px;width:1026px;height:1px;background:#e4e4e4"></div>
<div class="t" style="left:1356.5px;top:362.43px;font-size:19.1px;font-weight:700;color:#333;transform:translateX(-50%);">Doanh số bán hàng 7 ngày gần nhất</div>
<div class="box" style="left:913.5px;top:400.5px;width:945.5px;height:1px;background:#e6e6e6"></div>
<div class="t" style="left:899px;top:395.95px;font-size:12.7px;font-weight:400;color:#444;transform:translateX(-100%);">75k</div>
<div class="box" style="left:913.5px;top:452.5px;width:945.5px;height:1px;background:#e6e6e6"></div>
<div class="t" style="left:899px;top:447.95px;font-size:12.7px;font-weight:400;color:#444;transform:translateX(-100%);">50k</div>
<div class="box" style="left:913.5px;top:504.5px;width:945.5px;height:1px;background:#e6e6e6"></div>
<div class="t" style="left:899px;top:499.95px;font-size:12.7px;font-weight:400;color:#444;transform:translateX(-100%);">25k</div>
<div class="box" style="left:913.5px;top:556.5px;width:945.5px;height:1px;background:#333"></div>
<div class="t" style="left:899px;top:551.95px;font-size:12.7px;font-weight:400;color:#444;transform:translateX(-100%);">0</div>
<div class="t" style="left:864px;top:478.4px;font-size:12px;color:#666;transform:translate(-50%,-50%) rotate(-90deg);letter-spacing:0.3px">Values</div>
<svg class="i" style="left:0;top:0" width="1910" height="922"><polyline points="981.5,557.0 1116.5,557.0 1251.5,453.0 1386.5,557.0 1521.5,557.0 1656.5,453.0 1791.5,536.2" fill="none" stroke="#2eaefa" stroke-width="2.2"/><circle cx="981.5" cy="557.0" r="4.2" fill="#2eaefa"/><circle cx="1116.5" cy="557.0" r="4.2" fill="#2eaefa"/><circle cx="1251.5" cy="453.0" r="4.2" fill="#2eaefa"/><circle cx="1386.5" cy="557.0" r="4.2" fill="#2eaefa"/><circle cx="1521.5" cy="557.0" r="4.2" fill="#2eaefa"/><circle cx="1656.5" cy="453.0" r="4.2" fill="#2eaefa"/><circle cx="1791.5" cy="536.2" r="4.2" fill="#2eaefa"/></svg>
<div class="t" style="left:981.5px;top:574.15px;font-size:12.7px;font-weight:400;color:#333;transform:translateX(-50%);">2025-11-12T00:00:00</div>
<div class="t" style="left:1116.5px;top:574.15px;font-size:12.7px;font-weight:400;color:#333;transform:translateX(-50%);">2025-11-13T00:00:00</div>
<div class="t" style="left:1251.5px;top:574.15px;font-size:12.7px;font-weight:400;color:#333;transform:translateX(-50%);">2025-11-14T00:00:00</div>
<div class="t" style="left:1386.5px;top:574.15px;font-size:12.7px;font-weight:400;color:#333;transform:translateX(-50%);">2025-11-15T00:00:00</div>
<div class="t" style="left:1521.5px;top:574.15px;font-size:12.7px;font-weight:400;color:#333;transform:translateX(-50%);">2025-11-16T00:00:00</div>
<div class="t" style="left:1656.5px;top:574.15px;font-size:12.7px;font-weight:400;color:#333;transform:translateX(-50%);">2025-11-17T00:00:00</div>
<div class="t" style="left:1791.5px;top:574.15px;font-size:12.7px;font-weight:400;color:#333;transform:translateX(-50%);">2025-11-18T00:00:00</div>
<svg class="i" style="left:1329px;top:610px" width="20" height="10" viewBox="0 0 20 10"><path d="M1,5 H17" stroke="#2eaefa" stroke-width="2"/><circle cx="9" cy="5" r="4" fill="#2eaefa"/></svg>
<div class="t" style="left:1351px;top:609.05px;font-size:12.7px;font-weight:400;color:#444;">Ngày</div>
<div class="card" style="left:275px;top:690px;width:1614px;height:260px"></div>
<div class="t" style="left:295px;top:711.25px;font-size:16px;font-weight:400;color:#137fcc;">LỊCH SỬ BÁN HÀNG</div>
<div class="t" style="left:1780px;top:711.15px;font-size:14px;font-weight:400;color:#1a8cf5;">Xem tất cả</div>
<svg class="i" style="left:1855px;top:710.5px" width="16" height="17" viewBox="0 0 16 17"><g fill="none" stroke="#3a95e6" stroke-width="1.2"><path d="M2.5,1.8 L8.2,8.1 L2.5,14.4"/><path d="M7.8,1.8 L13.5,8.1 L7.8,14.4"/></g></svg>
<div class="box" style="left:295px;top:748px;width:1574px;height:45px;background:#f2f2f2;border-bottom:2px solid #dedede"></div>
<div class="t" style="left:325px;top:763.05px;font-size:14px;font-weight:700;color:#333;transform:translateX(-50%);">STT</div>
<div class="t" style="left:457px;top:763.05px;font-size:14px;font-weight:700;color:#333;transform:translateX(-50%);">THỜI GIAN</div>
<div class="t" style="left:773px;top:763.05px;font-size:14px;font-weight:700;color:#333;transform:translateX(-50%);">NỘI DUNG/SẢN PHẨM</div>
<div class="t" style="left:1104px;top:763.05px;font-size:14px;font-weight:700;color:#333;transform:translateX(-50%);">KHÁCH HÀNG</div>
<div class="t" style="left:1312.5px;top:763.05px;font-size:14px;font-weight:700;color:#333;transform:translateX(-50%);">GIÁ TRỊ QUY ĐỔI</div>
<div class="t" style="left:1462px;top:763.05px;font-size:14px;font-weight:700;color:#333;transform:translateX(-50%);">PHÍ (VND)</div>
<div class="t" style="left:1622.5px;top:763.05px;font-size:14px;font-weight:700;color:#333;transform:translateX(-50%);">THÀNH TIỀN (VND)</div>
<div class="t" style="left:1797px;top:763.05px;font-size:14px;font-weight:700;color:#333;transform:translateX(-50%);">TRẠNG THÁI</div>
<div class="t" style="left:325px;top:809.35px;font-size:14px;font-weight:400;color:#333;transform:translateX(-50%);">1</div>
<div class="t" style="left:457px;top:809.35px;font-size:14px;font-weight:400;color:#333;transform:translateX(-50%);">18/11/2025 13:59:14</div>
<div class="t" style="left:773px;top:809.35px;font-size:14px;font-weight:400;color:#333;transform:translateX(-50%);">Khách hàng thanh toán qua thẻ Visa</div>
<div class="t" style="left:1104px;top:809.35px;font-size:14px;font-weight:400;color:#333;transform:translateX(-50%);">Nguyễn Thị Minh, Hằng</div>
<div class="t" style="left:1312.5px;top:809.35px;font-size:14px;font-weight:400;color:#333;transform:translateX(-50%);">10,000</div>
<div class="t" style="left:1622.5px;top:809.35px;font-size:14px;font-weight:400;color:#333;transform:translateX(-50%);">10,000</div>
<div class="t" style="left:1797px;top:809.35px;font-size:14px;font-weight:400;color:#333;transform:translateX(-50%);">Thất bại</div>
<div class="box" style="left:295px;top:838px;width:1574px;height:1px;background:#dedede"></div>
<div class="t" style="left:325px;top:854.15px;font-size:14px;font-weight:400;color:#333;transform:translateX(-50%);">2</div>
<div class="t" style="left:457px;top:854.15px;font-size:14px;font-weight:400;color:#333;transform:translateX(-50%);">17/11/2025 11:01:03</div>
<div class="t" style="left:773px;top:854.15px;font-size:14px;font-weight:400;color:#333;transform:translateX(-50%);">Khách hàng thanh toán qua ngân hàng Tech...</div>
<div class="t" style="left:1104px;top:854.15px;font-size:14px;font-weight:400;color:#333;transform:translateX(-50%);">NGUYEN MANH TUNG</div>
<div class="t" style="left:1312.5px;top:854.15px;font-size:14px;font-weight:400;color:#333;transform:translateX(-50%);">10,000</div>
<div class="t" style="left:1622.5px;top:854.15px;font-size:14px;font-weight:400;color:#333;transform:translateX(-50%);">10,000</div>
<div class="t" style="left:1797px;top:854.15px;font-size:14px;font-weight:400;color:#333;transform:translateX(-50%);">Thành công</div>
<svg class="i" style="left:1834px;top:781px" width="50" height="50" viewBox="0 0 50 50">
<rect x="0.5" y="0.5" width="49" height="49" rx="21" fill="#fff" stroke="#cfe0fb" stroke-width="0.6" stroke-dasharray="1.6 1.4"/>
<path d="M9.5,2.3 C4,6 0.2,13 0,23.2 C0,31 1.5,38 5.7,43.6 C9,47.5 14,49.2 25.5,49.7 C33,49.8 41,47 46,42.1 C42,44.5 37,44.4 35.3,44.4 C30,44.6 27,45 24,44.8 C20,44.5 17,42.5 14.8,42.5 C12,42.5 9.5,43.5 7.3,43.3 C9,41.5 10,40 9.5,38.3 C6.5,35 5.7,33 5.7,31.5 C4.2,28 3.8,25 3.8,23.2 C3.8,17 5,13 9.5,2.3 Z" fill="#0068ff"/>
<text x="27.6" y="28.8" text-anchor="middle" font-family="Liberation Sans" font-weight="700" font-size="16" fill="#0068ff" letter-spacing="-0.3">Zalo</text>
</svg>
<div class="t" style="left:1599.5px;top:834.07px;font-size:20px;font-weight:400;color:rgba(110,110,110,.45);">Activate Windows</div>
<div class="t" style="left:1599.5px;top:858.92px;font-size:14.5px;font-weight:400;color:rgba(110,110,110,.45);letter-spacing:0.2px">Go to Settings to activate Windows.</div>
</body></html>
